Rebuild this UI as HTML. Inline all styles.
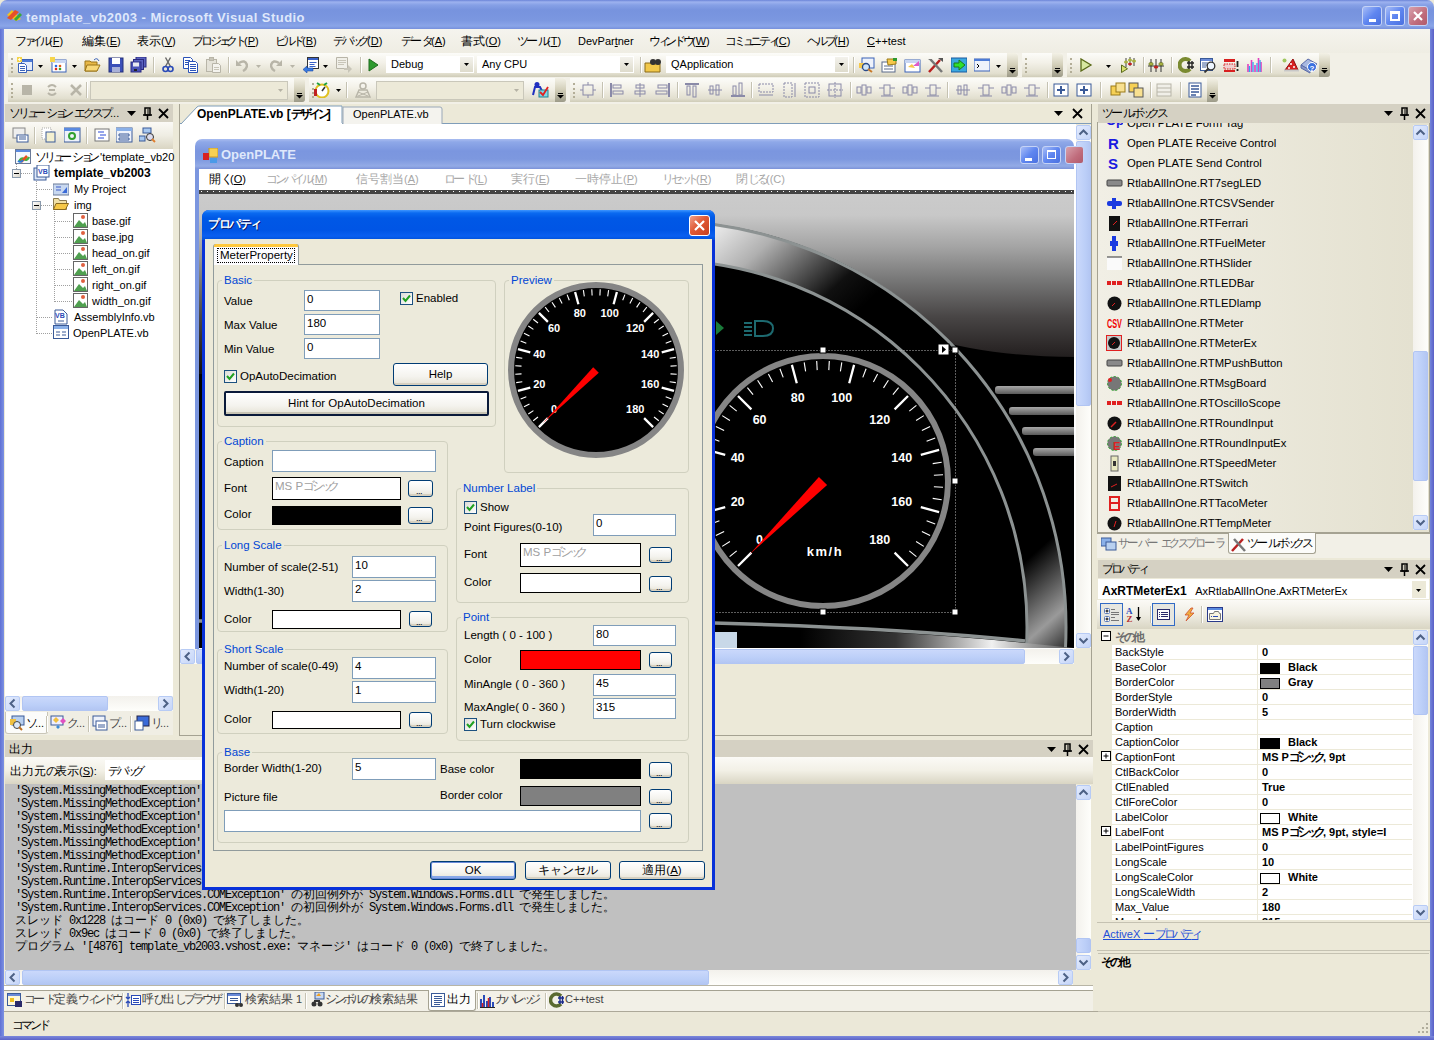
<!DOCTYPE html><html><head><meta charset="utf-8"><style>
*{margin:0;padding:0;box-sizing:border-box}
html,body{width:1434px;height:1040px;overflow:hidden}
body{position:relative;background:#ece9d8;font-family:"Liberation Sans",sans-serif;font-size:11px;color:#000}
.k{font-size:12px;letter-spacing:0}
.ks{font-size:12px;letter-spacing:-2px}
.h{font-size:12px;letter-spacing:3px}
.wide .k{letter-spacing:1px}
.wide .ks{letter-spacing:0}
.om .h{letter-spacing:3px;font-family:"Liberation Sans",sans-serif}
.cjk .k{letter-spacing:-3px}
.cjk .ks{letter-spacing:-5px}
.cjk .h{letter-spacing:0}
.cjk .wide .k{letter-spacing:-1.5px}
.cjk .wide .ks{letter-spacing:-3px}
.cjk .om .h{letter-spacing:0}
div{position:absolute}
.t{white-space:nowrap;line-height:14px}
.tb{position:absolute;background:linear-gradient(#fcfcf9,#f3f1e8 40%,#e2dfcf 85%,#cfccb8);border-radius:0 3px 3px 0}
.grip{position:absolute;width:2px;border-left:2px dotted #b3ae98}
.sep{position:absolute;width:1px;background:#c5c2b2;border-right:1px solid #fff}
.mono{font-family:"Liberation Mono",monospace;font-size:10px}
</style></head><body>
<div style="position:absolute;left:0px;top:0px;width:1434px;height:29px;background:linear-gradient(#6b84d8 0px,#9db2ef 2px,#86a0e6 5px,#7793de 10px,#7b97e0 20px,#8aa5e8 26px,#7690dc 29px);border-radius:7px 7px 0 0"></div>
<div style="position:absolute;left:0px;top:29px;width:4px;height:1011px;background:linear-gradient(90deg,#5f70d4,#7d92e2)"></div>
<div style="position:absolute;left:1430px;top:29px;width:4px;height:1011px;background:linear-gradient(90deg,#7386dc,#5a5fc6)"></div>
<div style="position:absolute;left:0px;top:1036px;width:1434px;height:4px;background:linear-gradient(#7a88dc,#5c64c8)"></div>
<svg style="position:absolute;left:6px;top:8px" width="16" height="14"><path d="M1 7 L6 2 L15 11 L10 13Z" fill="#f2c21a"/><path d="M1 10 L9 2 L13 4 L5 12Z" fill="#e6502a"/><path d="M9 12 L15 6" stroke="#3aa83a" stroke-width="3"/></svg>
<div class="t " style="left:26px;top:11px;font-weight:bold;font-size:13px;color:#dfe8fb;letter-spacing:0.45px">template_vb2003 - Microsoft Visual Studio</div>
<div style="position:absolute;left:1362px;top:6px;width:20px;height:20px;background:linear-gradient(135deg,#a7bdf7,#5f86f0 50%,#4a70e0);border:1px solid #c5d3f6;border-radius:3px"></div>
<div style="position:absolute;left:1385px;top:6px;width:20px;height:20px;background:linear-gradient(135deg,#a7bdf7,#5f86f0 50%,#4a70e0);border:1px solid #c5d3f6;border-radius:3px"></div>
<div style="position:absolute;left:1408px;top:6px;width:20px;height:20px;background:linear-gradient(135deg,#d8a1ac,#c06c7c 60%,#b05a6b);border:1px solid #c5d3f6;border-radius:3px"></div>
<div style="position:absolute;left:1369px;top:19px;width:7px;height:3px;background:#fff"></div>
<div style="position:absolute;left:1390px;top:11px;width:10px;height:10px;border:2px solid #fff;border-top-width:3px"></div>
<svg style="position:absolute;left:1411px;top:9px" width="14" height="14"><path d="M3 3L11 11M11 3L3 11" stroke="#fff" stroke-width="2.2"/></svg>
<div style="position:absolute;left:4px;top:29px;width:1426px;height:75px;background:#f2f0e7"></div>
<div style="position:absolute;left:4px;top:29px;width:1426px;height:24px;background:linear-gradient(#f5f4ee,#efede3)"></div>
<div class="t " style="left:15px;top:34px;"><span class="k">フ</span><span class="ks">ァ</span><span class="k">イル</span>(<u>F</u>)</div>
<div class="t " style="left:82px;top:34px;"><span class="h">編集</span>(<u>E</u>)</div>
<div class="t " style="left:137px;top:34px;"><span class="h">表示</span>(<u>V</u>)</div>
<div class="t " style="left:192px;top:34px;"><span class="k">プロジ</span><span class="ks">ェ</span><span class="k">クト</span>(<u>P</u>)</div>
<div class="t " style="left:275px;top:34px;"><span class="k">ビルド</span>(<u>B</u>)</div>
<div class="t " style="left:333px;top:34px;"><span class="k">デバ</span><span class="ks">ッ</span><span class="k">グ</span>(<u>D</u>)</div>
<div class="t " style="left:401px;top:34px;"><span class="k">デ</span><span class="h">ー</span><span class="k">タ</span>(<u>A</u>)</div>
<div class="t " style="left:461px;top:34px;"><span class="h">書式</span>(<u>O</u>)</div>
<div class="t " style="left:517px;top:34px;"><span class="k">ツ</span><span class="h">ー</span><span class="k">ル</span>(<u>T</u>)</div>
<div class="t " style="left:578px;top:34px;">DevPar<u>t</u>ner</div>
<div class="t " style="left:649px;top:34px;"><span class="k">ウ</span><span class="ks">ィ</span><span class="k">ンドウ</span>(<u>W</u>)</div>
<div class="t " style="left:725px;top:34px;"><span class="k">コミ</span><span class="ks">ュ</span><span class="k">ニテ</span><span class="ks">ィ</span>(<u>C</u>)</div>
<div class="t " style="left:807px;top:34px;"><span class="k">ヘルプ</span>(<u>H</u>)</div>
<div class="t " style="left:867px;top:34px;"><u>C</u>++test</div>
<div class="tb" style="left:8px;top:53px;width:1010px;height:24px"></div>
<div class="grip" style="left:11px;top:58px;height:15px"></div>
<div style="left:1007px;top:53px;width:11px;height:24px;background:linear-gradient(#f3f1e6,#d2ceb8 50%,#9c9a88);border-radius:0 3px 3px 0"></div>
<svg style="position:absolute;left:1009px;top:68px" width="7" height="6" viewBox="0 0 7 6"><rect x="1" y="0" width="5" height="1" fill="#000"/><path d="M0 2h7l-3.5 3.5z" fill="#000"/></svg>
<svg style="position:absolute;left:17px;top:57px" width="17" height="16" viewBox="0 0 17 16"><rect x="4.5" y="2.5" width="11" height="11" fill="#e4ecfa" stroke="#3a62b8"/><rect x="5" y="3" width="10" height="2" fill="#4d7bd6"/><path d="M1.5 6.5h6l2 2v7h-8z" fill="#fff" stroke="#3a62b8"/><path d="M3 9.5h5M3 11.5h5M3 13.5h5" stroke="#3a62b8"/><path d="M0 0h5v5H0z" fill="#f6d54b"/><path d="M1 2.5h3M2.5 1v3" stroke="#fff" stroke-width="0.8"/></svg>
<svg style="position:absolute;left:50px;top:57px" width="17" height="16" viewBox="0 0 17 16"><rect x="2" y="3" width="14" height="12" fill="#fff" stroke="#3a62b8"/><rect x="2" y="3" width="14" height="3" fill="#c8d6f2"/><circle cx="6" cy="9" r="1.3" fill="#2a6be0"/><circle cx="10" cy="9" r="1.3" fill="#e05a1a"/><circle cx="6" cy="12" r="1.3" fill="#e0281a"/><circle cx="10" cy="12" r="1.3" fill="#30a030"/><rect x="0" y="0" width="5" height="5" fill="#f6d54b"/></svg>
<svg style="position:absolute;left:84px;top:57px" width="17" height="16" viewBox="0 0 17 16"><path d="M1 4h5l1 1h6v9H1z" fill="#e8b848" stroke="#9a7418"/><path d="M3 8h13l-3 6H1z" fill="#f8d878" stroke="#9a7418"/><path d="M10 3q3-3 5 1" stroke="#3a62b8" fill="none"/></svg>
<svg style="position:absolute;left:108px;top:57px" width="16" height="16" viewBox="0 0 16 16"><rect x="1" y="1" width="14" height="14" fill="#3b4fb8" stroke="#25307a"/><rect x="4" y="1" width="8" height="6" fill="#fff"/><rect x="4" y="10" width="8" height="5" fill="#a8b0d8"/></svg>
<svg style="position:absolute;left:130px;top:57px" width="17" height="16" viewBox="0 0 17 16"><rect x="6" y="0" width="10" height="10" fill="#5a62c0" stroke="#2a2a80"/><rect x="3.5" y="2.5" width="10" height="10" fill="#5a62c0" stroke="#2a2a80"/><rect x="1" y="5" width="10" height="10" fill="#4a52b8" stroke="#2a2a80"/><rect x="3" y="5.5" width="6" height="4" fill="#e8e8f0"/><rect x="4" y="12" width="3" height="2" fill="#222"/></svg>
<svg style="position:absolute;left:38px;top:65px" width="5" height="3" viewBox="0 0 5 3"><path d="M0 0h5l-2.5 3z" fill="#000"/></svg>
<svg style="position:absolute;left:72px;top:65px" width="5" height="3" viewBox="0 0 5 3"><path d="M0 0h5l-2.5 3z" fill="#000"/></svg>
<div style="left:153px;top:57px;width:2px;height:16px;border-left:1px solid #c5c2b2;border-right:1px solid #fff"></div>
<svg style="position:absolute;left:162px;top:57px" width="12" height="16" viewBox="0 0 12 16"><path d="M3.5 0.5l5 9M8.5 0.5l-5 9" stroke="#666" stroke-width="1.4"/><circle cx="3.5" cy="12" r="2.5" fill="none" stroke="#2a4ab8" stroke-width="1.6"/><circle cx="8.5" cy="12" r="2.5" fill="none" stroke="#2a4ab8" stroke-width="1.6"/></svg>
<svg style="position:absolute;left:183px;top:57px" width="16" height="16" viewBox="0 0 16 16"><path d="M0.5 0.5h7l2 2v9h-9z" fill="#fff" stroke="#2a52b8"/><path d="M2 3.5h5M2 5.5h5M2 7.5h5" stroke="#2a52b8"/><path d="M5.5 4.5h7l2 2v9h-9z" fill="#fff" stroke="#2a52b8"/><path d="M7 7.5h6M7 9.5h6M7 11.5h6M7 13.5h6" stroke="#2a52b8"/></svg>
<svg style="position:absolute;left:206px;top:57px" width="16" height="16" viewBox="0 0 16 16"><rect x="0.5" y="2.5" width="10" height="12" fill="#e4e2d8" stroke="#b8b5a8"/><rect x="3.5" y="0.5" width="4" height="3" fill="#c8c5b8" stroke="#b8b5a8"/><path d="M6.5 6.5h6l2 2v7h-8z" fill="#f4f3ee" stroke="#b8b5a8"/><path d="M8 10.5h5M8 12.5h5" stroke="#c8c5b8"/></svg>
<div style="left:228px;top:57px;width:2px;height:16px;border-left:1px solid #c5c2b2;border-right:1px solid #fff"></div>
<svg style="position:absolute;left:236px;top:58px" width="12" height="14" viewBox="0 0 12 14"><path d="M3 5q6-4 8 2q0 4-4 6" fill="none" stroke="#b8b5a8" stroke-width="2.5"/><path d="M0 2v6h6z" fill="#b8b5a8"/></svg>
<svg style="position:absolute;left:256px;top:65px" width="5" height="3" viewBox="0 0 5 3"><path d="M0 0h5l-2.5 3z" fill="#b8b5a8"/></svg>
<svg style="position:absolute;left:270px;top:58px" width="12" height="14" viewBox="0 0 12 14"><path d="M9 5q-6-4-8 2q0 4 4 6" fill="none" stroke="#b8b5a8" stroke-width="2.5"/><path d="M12 2v6H6z" fill="#b8b5a8"/></svg>
<svg style="position:absolute;left:290px;top:65px" width="5" height="3" viewBox="0 0 5 3"><path d="M0 0h5l-2.5 3z" fill="#b8b5a8"/></svg>
<svg style="position:absolute;left:303px;top:57px" width="16" height="16" viewBox="0 0 16 16"><rect x="4.5" y="0.5" width="11" height="11" fill="#fff" stroke="#333"/><rect x="5" y="1" width="10" height="2" fill="#3a62c8"/><path d="M6.5 5.5h7M6.5 7.5h5M6.5 9.5h6" stroke="#3a62c8"/><path d="M0 12.5l4-3.5v2h6v3H4v2z" fill="#3a7ae0" stroke="#1a4aa8" stroke-width="0.6"/></svg>
<svg style="position:absolute;left:323px;top:65px" width="5" height="3" viewBox="0 0 5 3"><path d="M0 0h5l-2.5 3z" fill="#000"/></svg>
<svg style="position:absolute;left:336px;top:57px" width="16" height="16" viewBox="0 0 16 16"><path d="M0.5 0.5h11v11h-11z" fill="#f0efe8" stroke="#b8b5a8"/><path d="M2 3.5h8M2 5.5h8M2 7.5h6" stroke="#c8c5b8"/><path d="M8 11h4V8l4 4-4 4v-3H8z" fill="#c8c5b8"/></svg>
<div style="left:360px;top:57px;width:2px;height:16px;border-left:1px solid #c5c2b2;border-right:1px solid #fff"></div>
<svg style="position:absolute;left:367px;top:58px" width="12" height="14" viewBox="0 0 12 14"><path d="M2 1v12l9-6z" fill="#2e9a2e" stroke="#1e6a1e"/></svg>
<div style="left:386px;top:56px;width:88px;height:17px;background:#fff;border:1px solid #fff"></div>
<div style="left:460px;top:57px;width:13px;height:15px;background:linear-gradient(#f3f2ec,#dedbcc)"></div>
<svg style="position:absolute;left:464px;top:63px" width="5" height="3" viewBox="0 0 5 3"><path d="M0 0h5l-2.5 3z" fill="#000"/></svg>
<div class="t " style="left:391px;top:57px;">Debug</div>
<div style="left:477px;top:56px;width:157px;height:17px;background:#fff;border:1px solid #fff"></div>
<div style="left:620px;top:57px;width:13px;height:15px;background:linear-gradient(#f3f2ec,#dedbcc)"></div>
<svg style="position:absolute;left:624px;top:63px" width="5" height="3" viewBox="0 0 5 3"><path d="M0 0h5l-2.5 3z" fill="#000"/></svg>
<div class="t " style="left:482px;top:57px;">Any CPU</div>
<div style="left:640px;top:57px;width:2px;height:16px;border-left:1px solid #c5c2b2;border-right:1px solid #fff"></div>
<svg style="position:absolute;left:644px;top:57px" width="18" height="16" viewBox="0 0 18 16"><path d="M1 6h6l1 1h8v8H1z" fill="#f2c84a" stroke="#8a6a18"/><circle cx="9" cy="5" r="3" fill="#333"/><circle cx="14" cy="5" r="3" fill="#333"/></svg>
<div style="left:666px;top:56px;width:183px;height:17px;background:#fff;border:1px solid #fff"></div>
<div style="left:835px;top:57px;width:13px;height:15px;background:linear-gradient(#f3f2ec,#dedbcc)"></div>
<svg style="position:absolute;left:839px;top:63px" width="5" height="3" viewBox="0 0 5 3"><path d="M0 0h5l-2.5 3z" fill="#000"/></svg>
<div class="t " style="left:671px;top:57px;">QApplication</div>
<div style="left:853px;top:57px;width:2px;height:16px;border-left:1px solid #c5c2b2;border-right:1px solid #fff"></div>
<svg style="position:absolute;left:858px;top:57px" width="17" height="16" viewBox="0 0 17 16"><rect x="4" y="1" width="12" height="10" fill="#eef2fb" stroke="#3a62b8"/><path d="M1 6h6v5H1z" fill="#f6c84a"/><circle cx="8" cy="10" r="3.5" fill="#cfe4f8" stroke="#2a4a88" stroke-width="1.3"/><path d="M10 12l4 3" stroke="#c87a2a" stroke-width="2"/></svg>
<svg style="position:absolute;left:881px;top:57px" width="17" height="16" viewBox="0 0 17 16"><rect x="1" y="5" width="13" height="10" fill="#fff" stroke="#5a6a8a"/><path d="M3 9h9M3 12h9" stroke="#5a6a8a"/><path d="M6 2l9 0v5l-8 1z" fill="#f6c84a" stroke="#9a7a18"/><rect x="12" y="1" width="4" height="3" fill="#2e9a2e"/></svg>
<svg style="position:absolute;left:904px;top:57px" width="17" height="16" viewBox="0 0 17 16"><rect x="1" y="3" width="15" height="12" fill="#fff" stroke="#3a62b8"/><rect x="1" y="3" width="15" height="3" fill="#c8d6f2"/><path d="M4 10l4-3 3 4" fill="#f6c84a"/><path d="M9 9l6-5v5z" fill="#e05ac8"/></svg>
<svg style="position:absolute;left:927px;top:57px" width="17" height="16" viewBox="0 0 17 16"><path d="M2 15L13 3" stroke="#b82020" stroke-width="2.5"/><path d="M15 15L4 3" stroke="#777" stroke-width="2.5"/><path d="M1 2l4 0 0 3z" fill="#777"/><path d="M11 1h5v4z" fill="#555"/></svg>
<svg style="position:absolute;left:951px;top:57px" width="16" height="16" viewBox="0 0 16 16"><rect x="0" y="1" width="16" height="14" fill="#3aa8e0" stroke="#1a5aa0"/><path d="M3 6h5V3l6 5-6 5v-3H3z" fill="#2ee02e" stroke="#1a7a1a"/></svg>
<svg style="position:absolute;left:974px;top:57px" width="16" height="16" viewBox="0 0 16 16"><rect x="0" y="2" width="16" height="12" fill="#eef2fb" stroke="#3a62b8"/><rect x="0" y="2" width="16" height="2" fill="#4d7bd6"/><path d="M3 7l2 2-2 2" stroke="#000" fill="none"/></svg>
<svg style="position:absolute;left:996px;top:65px" width="5" height="3" viewBox="0 0 5 3"><path d="M0 0h5l-2.5 3z" fill="#000"/></svg>
<div class="tb" style="left:1022px;top:53px;width:41px;height:24px"></div>
<div class="grip" style="left:1025px;top:58px;height:15px"></div>
<div style="left:1052px;top:53px;width:11px;height:24px;background:linear-gradient(#f3f1e6,#d2ceb8 50%,#9c9a88);border-radius:0 3px 3px 0"></div>
<svg style="position:absolute;left:1054px;top:68px" width="7" height="6" viewBox="0 0 7 6"><rect x="1" y="0" width="5" height="1" fill="#000"/><path d="M0 2h7l-3.5 3.5z" fill="#000"/></svg>
<div class="tb" style="left:1067px;top:53px;width:263px;height:24px"></div>
<div class="grip" style="left:1070px;top:58px;height:15px"></div>
<div style="left:1319px;top:53px;width:11px;height:24px;background:linear-gradient(#f3f1e6,#d2ceb8 50%,#9c9a88);border-radius:0 3px 3px 0"></div>
<svg style="position:absolute;left:1321px;top:68px" width="7" height="6" viewBox="0 0 7 6"><rect x="1" y="0" width="5" height="1" fill="#000"/><path d="M0 2h7l-3.5 3.5z" fill="#000"/></svg>
<svg style="position:absolute;left:1079px;top:58px" width="14" height="14" viewBox="0 0 14 14"><path d="M2 1v12l10-6z" fill="#d8e8a0" stroke="#5a6a18" stroke-width="1.3"/></svg>
<svg style="position:absolute;left:1106px;top:65px" width="5" height="3" viewBox="0 0 5 3"><path d="M0 0h5l-2.5 3z" fill="#000"/></svg>
<svg style="position:absolute;left:1120px;top:57px" width="16" height="16" viewBox="0 0 16 16"><path d="M1.5 8v7.5l6-3.75z" fill="#d8e070" stroke="#5a6a18"/><path d="M6 1v9M10 0v9M14 1v8" stroke="#444"/><ellipse cx="6" cy="5" rx="2" ry="1.5" fill="#a8b040"/><ellipse cx="10" cy="3" rx="2" ry="1.5" fill="#a8b040"/><ellipse cx="10" cy="7" rx="2" ry="1.2" fill="#c02020"/><ellipse cx="14" cy="4" rx="2" ry="1.5" fill="#a8b040"/></svg>
<div style="left:1143px;top:57px;width:2px;height:16px;border-left:1px solid #c5c2b2;border-right:1px solid #fff"></div>
<svg style="position:absolute;left:1148px;top:58px" width="16" height="15" viewBox="0 0 16 15"><path d="M3 1v13M8 1v13M13 1v13M0 8h16" stroke="#333"/><ellipse cx="3" cy="6" rx="2.2" ry="1.6" fill="#a8b040" stroke="#5a6a18" stroke-width="0.6"/><ellipse cx="8" cy="9" rx="2.2" ry="1.6" fill="#c02020"/><ellipse cx="13" cy="6" rx="2.2" ry="1.6" fill="#a8b040" stroke="#5a6a18" stroke-width="0.6"/></svg>
<div style="left:1171px;top:57px;width:2px;height:16px;border-left:1px solid #c5c2b2;border-right:1px solid #fff"></div>
<svg style="position:absolute;left:1178px;top:57px" width="16" height="16" viewBox="0 0 16 16"><path d="M12 4A6 6 0 1 0 12 12" fill="none" stroke="#7a8a30" stroke-width="4"/><path d="M9 6h7M9 10h7M11 4v8M14 4v8" stroke="#222" stroke-width="1.4"/></svg>
<svg style="position:absolute;left:1200px;top:57px" width="16" height="16" viewBox="0 0 16 16"><rect x="0.5" y="1.5" width="12" height="12" fill="#fff" stroke="#3a5a98"/><rect x="1" y="2" width="11" height="2" fill="#6a8ad8"/><path d="M2 6h6M2 8h5M2 10h4" stroke="#3a5a98"/><circle cx="11" cy="9" r="3.8" fill="#eef6ff" stroke="#333" stroke-width="1.3"/><path d="M8.5 11.5l-4 4" stroke="#333" stroke-width="1.8"/></svg>
<svg style="position:absolute;left:1223px;top:57px" width="16" height="16" viewBox="0 0 16 16"><rect x="1" y="2" width="11" height="3" fill="#d82020"/><rect x="1" y="7" width="11" height="5" fill="#f0d0d0" stroke="#d82020" stroke-dasharray="1.5 1"/><rect x="1" y="13" width="11" height="2" fill="#d82020"/><path d="M14.5 4v6M14.5 12v2" stroke="#222" stroke-width="1.8"/></svg>
<svg style="position:absolute;left:1246px;top:57px" width="16" height="16" viewBox="0 0 16 16"><path d="M2 15V7M5.5 15V3M9 15V8M12.5 15V1M15 15V5" stroke="#e040c0" stroke-width="1.6"/><path d="M3.5 15V9M7 15V5M11 15V6M14 15V3" stroke="#30a8f0" stroke-width="1.3"/></svg>
<div style="left:1270px;top:57px;width:2px;height:16px;border-left:1px solid #c5c2b2;border-right:1px solid #fff"></div>
<svg style="position:absolute;left:1282px;top:57px" width="18" height="16" viewBox="0 0 18 16"><path d="M3 13L11 2l5 11z" fill="#d82020" stroke="#901010"/><circle cx="9" cy="7" r="1" fill="#fff"/><circle cx="12" cy="10" r="1" fill="#fff"/><circle cx="7" cy="11" r="1" fill="#fff"/><path d="M2 13.5h15" stroke="#c8c8c8" stroke-width="2"/><circle cx="2.5" cy="3.5" r="2" fill="#a0c860"/></svg>
<svg style="position:absolute;left:1300px;top:57px" width="18" height="17" viewBox="0 0 18 17"><path d="M1 8l7-6 9 5-7 7z" fill="#a8b8e0" stroke="#5a6aa8"/><path d="M1 8v3l9 5v-3z" fill="#8898c8" stroke="#5a6aa8"/><circle cx="12" cy="10" r="4.5" fill="#3a70e0" stroke="#fff"/><text x="9.5" y="13.5" font-size="8" font-weight="bold" fill="#fff" font-family="Liberation Sans">?</text></svg>
<div class="tb" style="left:8px;top:78px;width:297px;height:24px"></div>
<div class="grip" style="left:11px;top:83px;height:15px"></div>
<div style="left:294px;top:78px;width:11px;height:24px;background:linear-gradient(#f3f1e6,#d2ceb8 50%,#9c9a88);border-radius:0 3px 3px 0"></div>
<svg style="position:absolute;left:296px;top:93px" width="7" height="6" viewBox="0 0 7 6"><rect x="1" y="0" width="5" height="1" fill="#000"/><path d="M0 2h7l-3.5 3.5z" fill="#000"/></svg>
<svg style="position:absolute;left:21px;top:84px" width="12" height="12" viewBox="0 0 12 12"><rect x="1" y="1" width="10" height="10" fill="#b8b5a8"/></svg>
<svg style="position:absolute;left:46px;top:83px" width="12" height="14" viewBox="0 0 12 14"><path d="M2 4q4-4 8 0M2 10q4 4 8 0M3 7h6" stroke="#b8b5a8" stroke-width="2" fill="none"/></svg>
<svg style="position:absolute;left:70px;top:84px" width="12" height="12" viewBox="0 0 12 12"><path d="M1 11L11 1M1 1l10 10" stroke="#b8b5a8" stroke-width="2.5"/></svg>
<div style="left:86px;top:82px;width:2px;height:16px;border-left:1px solid #c5c2b2;border-right:1px solid #fff"></div>
<div style="left:90px;top:81px;width:198px;height:19px;background:#ece9d8;border:1px solid #c9c7ba"></div>
<div style="left:274px;top:82px;width:13px;height:17px;background:#ece9d8"></div>
<svg style="position:absolute;left:278px;top:89px" width="5" height="3" viewBox="0 0 5 3"><path d="M0 0h5l-2.5 3z" fill="#b5b2a5"/></svg>
<div class="tb" style="left:309px;top:78px;width:257px;height:24px"></div>
<div class="grip" style="left:312px;top:83px;height:15px"></div>
<div style="left:555px;top:78px;width:11px;height:24px;background:linear-gradient(#f3f1e6,#d2ceb8 50%,#9c9a88);border-radius:0 3px 3px 0"></div>
<svg style="position:absolute;left:557px;top:93px" width="7" height="6" viewBox="0 0 7 6"><rect x="1" y="0" width="5" height="1" fill="#000"/><path d="M0 2h7l-3.5 3.5z" fill="#000"/></svg>
<svg style="position:absolute;left:313px;top:81px" width="17" height="17" viewBox="0 0 17 17"><circle cx="9" cy="10" r="6.5" fill="#fff" stroke="#e0c020" stroke-width="2"/><path d="M9 10l3-4" stroke="#333" stroke-width="1.5"/><rect x="1" y="8" width="3" height="7" fill="#c02020"/><path d="M4 2l3 2M14 2l-3 2" stroke="#20a040" stroke-width="2"/></svg>
<svg style="position:absolute;left:336px;top:89px" width="5" height="3" viewBox="0 0 5 3"><path d="M0 0h5l-2.5 3z" fill="#000"/></svg>
<div style="left:346px;top:82px;width:2px;height:16px;border-left:1px solid #c5c2b2;border-right:1px solid #fff"></div>
<svg style="position:absolute;left:355px;top:82px" width="16" height="16" viewBox="0 0 16 16"><circle cx="8" cy="4" r="3" fill="none" stroke="#b8b5a8" stroke-width="1.5"/><path d="M1 15l3-7h8l3 7z" fill="none" stroke="#b8b5a8" stroke-width="1.5"/><path d="M3 10l10 4M13 10L3 14" stroke="#b8b5a8"/></svg>
<div style="left:376px;top:81px;width:148px;height:19px;background:#ece9d8;border:1px solid #c9c7ba"></div>
<div style="left:510px;top:82px;width:13px;height:17px;background:#ece9d8"></div>
<svg style="position:absolute;left:514px;top:89px" width="5" height="3" viewBox="0 0 5 3"><path d="M0 0h5l-2.5 3z" fill="#b5b2a5"/></svg>
<svg style="position:absolute;left:532px;top:81px" width="17" height="17" viewBox="0 0 17 17"><circle cx="5" cy="3.5" r="2.5" fill="#2030c0"/><path d="M1 14l2-8h5l2 4" fill="none" stroke="#2030c0" stroke-width="2"/><rect x="7" y="9" width="9" height="7" fill="#80d8e8" stroke="#208090"/><path d="M8 11l3 3 5-8" stroke="#e02020" stroke-width="1.8" fill="none"/></svg>
<div class="tb" style="left:570px;top:78px;width:648px;height:24px"></div>
<div class="grip" style="left:573px;top:83px;height:15px"></div>
<div style="left:1207px;top:78px;width:11px;height:24px;background:linear-gradient(#f3f1e6,#d2ceb8 50%,#9c9a88);border-radius:0 3px 3px 0"></div>
<svg style="position:absolute;left:1209px;top:93px" width="7" height="6" viewBox="0 0 7 6"><rect x="1" y="0" width="5" height="1" fill="#000"/><path d="M0 2h7l-3.5 3.5z" fill="#000"/></svg>
<svg style="position:absolute;left:580px;top:82px" width="16" height="16" viewBox="0 0 16 16"><rect x="3" y="3" width="10" height="10" fill="none" stroke="#8a8aa8"/><path d="M8 0v3M8 13v3M0 8h3M13 8h3" stroke="#8a8aa8"/></svg>
<div style="left:602px;top:82px;width:2px;height:16px;border-left:1px solid #c5c2b2;border-right:1px solid #fff"></div>
<svg style="position:absolute;left:609px;top:82px" width="16" height="16" viewBox="0 0 16 16"><path d="M2 1v14" stroke="#8a8aa8" stroke-width="2"/><rect x="4" y="3" width="8" height="3" fill="none" stroke="#8a8aa8"/><rect x="4" y="9" width="10" height="3" fill="none" stroke="#8a8aa8"/></svg>
<svg style="position:absolute;left:632px;top:82px" width="16" height="16" viewBox="0 0 16 16"><path d="M8 1v14" stroke="#8a8aa8"/><rect x="4" y="3" width="8" height="3" fill="none" stroke="#8a8aa8"/><rect x="3" y="9" width="10" height="3" fill="none" stroke="#8a8aa8"/></svg>
<svg style="position:absolute;left:655px;top:82px" width="16" height="16" viewBox="0 0 16 16"><path d="M14 1v14" stroke="#8a8aa8" stroke-width="2"/><rect x="3" y="3" width="9" height="3" fill="none" stroke="#8a8aa8"/><rect x="1" y="9" width="11" height="3" fill="none" stroke="#8a8aa8"/></svg>
<div style="left:677px;top:82px;width:2px;height:16px;border-left:1px solid #c5c2b2;border-right:1px solid #fff"></div>
<svg style="position:absolute;left:684px;top:82px" width="16" height="16" viewBox="0 0 16 16"><path d="M1 2h14" stroke="#8a8aa8" stroke-width="2"/><rect x="3" y="4" width="3" height="9" fill="none" stroke="#8a8aa8"/><rect x="9" y="4" width="3" height="11" fill="none" stroke="#8a8aa8"/></svg>
<svg style="position:absolute;left:707px;top:82px" width="16" height="16" viewBox="0 0 16 16"><path d="M1 8h14" stroke="#8a8aa8"/><rect x="3" y="4" width="3" height="8" fill="none" stroke="#8a8aa8"/><rect x="9" y="3" width="3" height="10" fill="none" stroke="#8a8aa8"/></svg>
<svg style="position:absolute;left:730px;top:82px" width="16" height="16" viewBox="0 0 16 16"><path d="M1 14h14" stroke="#8a8aa8" stroke-width="2"/><rect x="3" y="4" width="3" height="9" fill="none" stroke="#8a8aa8"/><rect x="9" y="1" width="3" height="12" fill="none" stroke="#8a8aa8"/></svg>
<div style="left:751px;top:82px;width:2px;height:16px;border-left:1px solid #c5c2b2;border-right:1px solid #fff"></div>
<svg style="position:absolute;left:758px;top:82px" width="16" height="16" viewBox="0 0 16 16"><rect x="1" y="2" width="14" height="8" fill="none" stroke="#8a8aa8" stroke-dasharray="2 1"/><path d="M1 13h14" stroke="#8a8aa8"/></svg>
<svg style="position:absolute;left:781px;top:82px" width="16" height="16" viewBox="0 0 16 16"><rect x="3" y="1" width="8" height="14" fill="none" stroke="#8a8aa8" stroke-dasharray="2 1"/><path d="M14 1v14" stroke="#8a8aa8"/></svg>
<svg style="position:absolute;left:804px;top:82px" width="16" height="16" viewBox="0 0 16 16"><rect x="1" y="1" width="14" height="14" fill="none" stroke="#8a8aa8" stroke-dasharray="2 1"/><rect x="5" y="5" width="6" height="6" fill="none" stroke="#8a8aa8"/></svg>
<svg style="position:absolute;left:827px;top:82px" width="16" height="16" viewBox="0 0 16 16"><rect x="2" y="2" width="12" height="12" fill="none" stroke="#8a8aa8"/><path d="M8 0v16M0 8h16" stroke="#8a8aa8" stroke-dasharray="2 1"/></svg>
<div style="left:850px;top:82px;width:2px;height:16px;border-left:1px solid #c5c2b2;border-right:1px solid #fff"></div>
<svg style="position:absolute;left:856px;top:82px" width="16" height="16" viewBox="0 0 16 16"><rect x="1" y="5" width="4" height="6" fill="none" stroke="#8a8aa8"/><rect x="6" y="3" width="4" height="10" fill="none" stroke="#8a8aa8"/><rect x="11" y="5" width="4" height="6" fill="none" stroke="#8a8aa8"/></svg>
<svg style="position:absolute;left:879px;top:82px" width="16" height="16" viewBox="0 0 16 16"><rect x="5" y="3" width="6" height="10" fill="none" stroke="#8a8aa8"/><path d="M0 6h5M11 6h5M2 14h12" stroke="#8a8aa8"/></svg>
<svg style="position:absolute;left:902px;top:82px" width="16" height="16" viewBox="0 0 16 16"><rect x="1" y="5" width="4" height="6" fill="none" stroke="#8a8aa8"/><rect x="6" y="3" width="4" height="10" fill="none" stroke="#8a8aa8"/><rect x="11" y="5" width="4" height="6" fill="none" stroke="#8a8aa8"/></svg>
<svg style="position:absolute;left:925px;top:82px" width="16" height="16" viewBox="0 0 16 16"><rect x="5" y="3" width="6" height="10" fill="none" stroke="#8a8aa8"/><path d="M0 6h5M11 6h5M2 14h12" stroke="#8a8aa8"/></svg>
<div style="left:947px;top:82px;width:2px;height:16px;border-left:1px solid #c5c2b2;border-right:1px solid #fff"></div>
<svg style="position:absolute;left:955px;top:82px" width="16" height="16" viewBox="0 0 16 16"><path d="M1 8h14" stroke="#8a8aa8"/><rect x="3" y="4" width="3" height="8" fill="none" stroke="#8a8aa8"/><rect x="9" y="3" width="3" height="10" fill="none" stroke="#8a8aa8"/></svg>
<svg style="position:absolute;left:978px;top:82px" width="16" height="16" viewBox="0 0 16 16"><rect x="5" y="3" width="6" height="10" fill="none" stroke="#8a8aa8"/><path d="M0 6h5M11 6h5M2 14h12" stroke="#8a8aa8"/></svg>
<svg style="position:absolute;left:1001px;top:82px" width="16" height="16" viewBox="0 0 16 16"><rect x="1" y="5" width="4" height="6" fill="none" stroke="#8a8aa8"/><rect x="6" y="3" width="4" height="10" fill="none" stroke="#8a8aa8"/><rect x="11" y="5" width="4" height="6" fill="none" stroke="#8a8aa8"/></svg>
<svg style="position:absolute;left:1024px;top:82px" width="16" height="16" viewBox="0 0 16 16"><rect x="5" y="3" width="6" height="10" fill="none" stroke="#8a8aa8"/><path d="M0 6h5M11 6h5M2 14h12" stroke="#8a8aa8"/></svg>
<div style="left:1047px;top:82px;width:2px;height:16px;border-left:1px solid #c5c2b2;border-right:1px solid #fff"></div>
<svg style="position:absolute;left:1053px;top:82px" width="16" height="16" viewBox="0 0 16 16"><rect x="1" y="2" width="14" height="12" fill="#fff" stroke="#3a5a98"/><path d="M8 4v8M4 8h8" stroke="#3a5a98" stroke-width="2"/></svg>
<svg style="position:absolute;left:1076px;top:82px" width="16" height="16" viewBox="0 0 16 16"><rect x="1" y="2" width="14" height="12" fill="#fff" stroke="#3a5a98"/><path d="M8 4v8M4 8h8" stroke="#3a5a98" stroke-width="2"/></svg>
<div style="left:1100px;top:82px;width:2px;height:16px;border-left:1px solid #c5c2b2;border-right:1px solid #fff"></div>
<svg style="position:absolute;left:1110px;top:82px" width="16" height="16" viewBox="0 0 16 16"><rect x="1" y="4" width="9" height="9" fill="#f6d054" stroke="#9a7a18"/><rect x="6" y="1" width="9" height="9" fill="#f8e090" stroke="#9a7a18"/></svg>
<svg style="position:absolute;left:1128px;top:82px" width="16" height="16" viewBox="0 0 16 16"><rect x="1" y="1" width="9" height="9" fill="#f6d054" stroke="#555"/><rect x="6" y="6" width="9" height="9" fill="#f8e090" stroke="#555"/></svg>
<div style="left:1150px;top:82px;width:2px;height:16px;border-left:1px solid #c5c2b2;border-right:1px solid #fff"></div>
<svg style="position:absolute;left:1156px;top:82px" width="16" height="16" viewBox="0 0 16 16"><rect x="1" y="2" width="14" height="12" fill="#f0efe8" stroke="#b8b5a8"/><path d="M1 6h14M1 10h14" stroke="#b8b5a8"/></svg>
<div style="left:1180px;top:82px;width:2px;height:16px;border-left:1px solid #c5c2b2;border-right:1px solid #fff"></div>
<svg style="position:absolute;left:1188px;top:82px" width="16" height="16" viewBox="0 0 16 16"><rect x="1" y="1" width="12" height="14" fill="#fff" stroke="#3a5a98"/><path d="M3 4h8M3 7h8M3 10h8M3 13h5" stroke="#3a5a98" stroke-width="1.5"/></svg>
<div style="position:absolute;left:5px;top:104px;width:168px;height:19px;background:#d5d1c3"></div>
<div class="t " style="left:9px;top:106px;"><span class="k">ソリ</span><span class="ks">ュ</span><span class="h">ー</span><span class="k">シ</span><span class="ks">ョ</span><span class="k">ン</span> <span class="k">エクスプ</span>...</div>
<svg style="position:absolute;left:127px;top:111px" width="9" height="6" viewBox="0 0 9 6"><path d="M0 0h9l-4.5 5z" fill="#000"/></svg>
<svg style="position:absolute;left:143px;top:107px" width="9" height="13" viewBox="0 0 9 13"><path d="M2 1h5v7H2z" fill="none" stroke="#000" stroke-width="1.5"/><path d="M0 8h9M4.5 8v5" stroke="#000" stroke-width="1.5"/><path d="M5 2v5" stroke="#000"/></svg>
<svg style="position:absolute;left:158px;top:108px" width="11" height="11" viewBox="0 0 11 11"><path d="M1 1l9 9M10 1l-9 9" stroke="#000" stroke-width="1.8"/></svg>
<div style="position:absolute;left:5px;top:122px;width:168px;height:27px;background:linear-gradient(#fbfaf6,#efede3 50%,#d9d5c3)"></div>
<svg style="position:absolute;left:12px;top:127px" width="17" height="17" viewBox="0 0 17 17"><rect x="1" y="1" width="12" height="10" fill="#eee" stroke="#888"/><rect x="5" y="8" width="11" height="7" fill="#fff" stroke="#3a5a98"/><path d="M7 10h7M7 12h7" stroke="#3a5a98"/></svg>
<svg style="position:absolute;left:41px;top:127px" width="17" height="17" viewBox="0 0 17 17"><rect x="1" y="1" width="9" height="11" fill="#fff" stroke="#aaa" stroke-dasharray="1 1"/><rect x="5" y="5" width="9" height="10" fill="#f4f0d0" stroke="#3a5a98"/></svg>
<svg style="position:absolute;left:64px;top:127px" width="17" height="17" viewBox="0 0 17 17"><rect x="0" y="1" width="16" height="14" fill="#eef2fb" stroke="#3a5a98"/><rect x="0" y="1" width="16" height="3" fill="#5a8ae0"/><path d="M5 9a3 3 0 0 1 6 0M11 9a3 3 0 0 1-6 0" stroke="#30a030" stroke-width="2" fill="none"/></svg>
<svg style="position:absolute;left:94px;top:127px" width="17" height="17" viewBox="0 0 17 17"><rect x="1" y="2" width="14" height="12" fill="#fff" stroke="#777"/><path d="M4 5h6M6 8h6M4 11h6" stroke="#2a4ad8"/></svg>
<svg style="position:absolute;left:116px;top:127px" width="17" height="17" viewBox="0 0 17 17"><rect x="0" y="1" width="16" height="14" fill="#eef2fb" stroke="#3a5a98"/><rect x="0" y="1" width="16" height="3" fill="#8ab0e8"/><path d="M3 7h10v2H3zM3 11h10v2H3z" fill="none" stroke="#3a5a98"/></svg>
<svg style="position:absolute;left:139px;top:127px" width="17" height="17" viewBox="0 0 17 17"><rect x="4" y="1" width="8" height="5" fill="#a8c8f0" stroke="#3a5a98"/><rect x="0" y="9" width="6" height="5" fill="#a8c8f0" stroke="#3a5a98"/><circle cx="11" cy="10" r="3.5" fill="#dde" stroke="#333"/><path d="M13 12l3 3" stroke="#e08030" stroke-width="2"/></svg>
<div style="left:34px;top:127px;width:2px;height:17px;border-left:1px solid #c5c2b2;border-right:1px solid #fff"></div>
<div style="left:86px;top:127px;width:2px;height:17px;border-left:1px solid #c5c2b2;border-right:1px solid #fff"></div>
<div style="position:absolute;left:5px;top:149px;width:168px;height:547px;background:#fff"></div>
<svg style="position:absolute;left:0;top:0" width="180" height="360"><g stroke="#a0a0a0" stroke-dasharray="1 1"><path d="M16.5 164v5M21 173.5h12"/><path d="M36.5 179v155M37 189.5h16M41 205.5h12M37 317.5h16M37 333.5h16"/><path d="M54.5 211v91M55 221.5h18M55 237.5h18M55 253.5h18M55 269.5h18M55 285.5h18M55 301.5h18"/></g></svg>
<svg style="position:absolute;left:15px;top:149px" width="17" height="16" viewBox="0 0 17 16"><rect x="0.5" y="0.5" width="15" height="14" fill="#f4f8fe" stroke="#6a7a98"/><rect x="1" y="1" width="14" height="2" fill="#5a8ae0"/><path d="M4 13q2-5 5-3t5-2" fill="none" stroke="#40b040" stroke-width="2.5"/><path d="M6 13l6-6" stroke="#e85020" stroke-width="2.5"/><path d="M3 12q3 2 5-1" fill="none" stroke="#2a7ae0" stroke-width="2"/></svg>
<div class="t " style="left:35px;top:150px;"><span class="k">ソリ</span><span class="ks">ュ</span><span class="h">ー</span><span class="k">シ</span><span class="ks">ョ</span><span class="k">ン</span> 'template_vb20</div>
<svg style="position:absolute;left:33px;top:165px" width="17" height="16" viewBox="0 0 17 16"><rect x="1" y="3" width="12" height="12" fill="#dfe8f8" stroke="#3a5a98"/><rect x="4" y="0" width="12" height="12" fill="#fff" stroke="#3a5a98"/><text x="5" y="9" font-size="7" font-weight="bold" fill="#2a4ab8" font-family="Liberation Sans">VB</text></svg>
<div class="t " style="left:54px;top:166px;font-weight:bold;font-size:12px">template_vb2003</div>
<div style="position:absolute;left:12px;top:169px;width:9px;height:9px;background:linear-gradient(135deg,#fff,#d8d4c8);border:1px solid #8a9aac"></div>
<div style="position:absolute;left:14px;top:173px;width:5px;height:1px;background:#000"></div>
<svg style="position:absolute;left:53px;top:181px" width="16" height="16" viewBox="0 0 16 16"><rect x="0" y="3" width="16" height="11" fill="#c8d8f0" stroke="#6a7a98"/><path d="M3 6h5M3 9h5" stroke="#3a5ac8"/><path d="M9 12l5-6v6z" fill="#3a6ad8"/></svg>
<div class="t " style="left:74px;top:182px;">My Project</div>
<svg style="position:absolute;left:53px;top:197px" width="16" height="14" viewBox="0 0 16 14"><path d="M0.5 1.5h5l1 2h7v9h-13z" fill="#f0e0a8" stroke="#8a7a50"/><path d="M3 6.5h12.5l-3 6h-12z" fill="#f6c848" stroke="#8a6a20"/></svg>
<div class="t " style="left:74px;top:198px;">img</div>
<div style="position:absolute;left:32px;top:201px;width:9px;height:9px;background:linear-gradient(135deg,#fff,#d8d4c8);border:1px solid #8a9aac"></div>
<div style="position:absolute;left:34px;top:205px;width:5px;height:1px;background:#000"></div>
<svg style="position:absolute;left:73px;top:213px" width="15" height="15" viewBox="0 0 15 15"><rect x="0.5" y="0.5" width="14" height="14" fill="#fff" stroke="#666"/><path d="M1 14l5-7 4 4 2-2 2 5z" fill="#50a050"/><circle cx="10" cy="4" r="2" fill="#e06040"/></svg>
<div class="t " style="left:92px;top:214px;">base.gif</div>
<svg style="position:absolute;left:73px;top:229px" width="15" height="15" viewBox="0 0 15 15"><rect x="0.5" y="0.5" width="14" height="14" fill="#fff" stroke="#666"/><path d="M1 14l5-7 4 4 2-2 2 5z" fill="#50a050"/><circle cx="10" cy="4" r="2" fill="#e06040"/></svg>
<div class="t " style="left:92px;top:230px;">base.jpg</div>
<svg style="position:absolute;left:73px;top:245px" width="15" height="15" viewBox="0 0 15 15"><rect x="0.5" y="0.5" width="14" height="14" fill="#fff" stroke="#666"/><path d="M1 14l5-7 4 4 2-2 2 5z" fill="#50a050"/><circle cx="10" cy="4" r="2" fill="#e06040"/></svg>
<div class="t " style="left:92px;top:246px;">head_on.gif</div>
<svg style="position:absolute;left:73px;top:261px" width="15" height="15" viewBox="0 0 15 15"><rect x="0.5" y="0.5" width="14" height="14" fill="#fff" stroke="#666"/><path d="M1 14l5-7 4 4 2-2 2 5z" fill="#50a050"/><circle cx="10" cy="4" r="2" fill="#e06040"/></svg>
<div class="t " style="left:92px;top:262px;">left_on.gif</div>
<svg style="position:absolute;left:73px;top:277px" width="15" height="15" viewBox="0 0 15 15"><rect x="0.5" y="0.5" width="14" height="14" fill="#fff" stroke="#666"/><path d="M1 14l5-7 4 4 2-2 2 5z" fill="#50a050"/><circle cx="10" cy="4" r="2" fill="#e06040"/></svg>
<div class="t " style="left:92px;top:278px;">right_on.gif</div>
<svg style="position:absolute;left:73px;top:293px" width="15" height="15" viewBox="0 0 15 15"><rect x="0.5" y="0.5" width="14" height="14" fill="#fff" stroke="#666"/><path d="M1 14l5-7 4 4 2-2 2 5z" fill="#50a050"/><circle cx="10" cy="4" r="2" fill="#e06040"/></svg>
<div class="t " style="left:92px;top:294px;">width_on.gif</div>
<svg style="position:absolute;left:54px;top:309px" width="14" height="16" viewBox="0 0 14 16"><path d="M1 1h8l4 4v10H1z" fill="#fff" stroke="#3a5a98"/><text x="1" y="9" font-size="7" font-weight="bold" fill="#2a4ab8" font-family="Liberation Sans">VB</text><path d="M4 12h6" stroke="#3a5a98"/></svg>
<div class="t " style="left:74px;top:310px;">AssemblyInfo.vb</div>
<svg style="position:absolute;left:53px;top:325px" width="16" height="14" viewBox="0 0 16 14"><rect x="0.5" y="0.5" width="15" height="13" fill="#fff" stroke="#3a5a98"/><rect x="1" y="1" width="14" height="3" fill="#8ab0e8"/><path d="M3 7h4M9 7h4M3 10h4M9 10h4" stroke="#3a5a98"/></svg>
<div class="t " style="left:73px;top:326px;">OpenPLATE.vb</div>
<div style="position:absolute;left:5px;top:696px;width:168px;height:15px;background:linear-gradient(#f3f1ec,#fefefb)"></div>
<div style="left:5px;top:696px;width:15px;height:15px;background:linear-gradient(135deg,#e3ebfd,#c5d5f8);border:1px solid #b7cbf5;border-radius:2px"></div>
<svg style="position:absolute;left:0;top:0;overflow:visible" width="1" height="1"><path d="M14.5 699.5l-4 4 4 4" fill="none" stroke="#4d6185" stroke-width="2"/></svg>
<div style="left:158px;top:696px;width:15px;height:15px;background:linear-gradient(135deg,#e3ebfd,#c5d5f8);border:1px solid #b7cbf5;border-radius:2px"></div>
<svg style="position:absolute;left:0;top:0;overflow:visible" width="1" height="1"><path d="M163.5 699.5l4 4-4 4" fill="none" stroke="#4d6185" stroke-width="2"/></svg>
<div style="left:22px;top:696px;width:86px;height:15px;background:linear-gradient(#cad8fb,#bccff8 60%,#b3c6f3);border:1px solid #b1c5f3;border-radius:2px"></div>
<div style="position:absolute;left:5px;top:711px;width:168px;height:24px;background:#f0eee4"></div>
<div style="position:absolute;left:5px;top:712px;width:43px;height:22px;background:#fcfcfa;border:1px solid #c9c6b8;border-top:none;border-radius:0 0 3px 3px"></div>
<svg style="position:absolute;left:9px;top:715px" width="16" height="16" viewBox="0 0 16 16"><rect x="3" y="1" width="12" height="9" fill="#b8d0f0" stroke="#3a5a98"/><path d="M1 4h6v6H1z" fill="#f0c040"/><circle cx="8" cy="10" r="3.5" fill="#dde8f8" stroke="#444"/><path d="M10 12l3 3" stroke="#c07020" stroke-width="2"/></svg>
<div class="t " style="left:26px;top:716px;"><span class="k">ソ</span>...</div>
<svg style="position:absolute;left:50px;top:715px" width="16" height="16" viewBox="0 0 16 16"><rect x="1" y="1" width="12" height="9" fill="#eef" stroke="#3a5a98"/><path d="M3 5l3-3 3 3-3 3z" fill="#f0c040"/><path d="M10 6l3-3 3 3-3 3z" fill="#e050c0"/><path d="M6 12l2-2 2 2-2 2z" fill="#3a8ad8"/></svg>
<div class="t " style="left:67px;top:716px;color:#444"><span class="k">ク</span>...</div>
<div style="left:46px;top:716px;width:2px;height:16px;border-left:1px solid #c5c2b2;border-right:1px solid #fff"></div>
<svg style="position:absolute;left:92px;top:715px" width="16" height="16" viewBox="0 0 16 16"><rect x="1" y="1" width="12" height="10" fill="#eef2fb" stroke="#3a5a98"/><rect x="4" y="6" width="11" height="9" fill="#fff" stroke="#3a5a98"/><path d="M6 10h7M6 12h7" stroke="#3a5a98"/></svg>
<div class="t " style="left:109px;top:716px;color:#444"><span class="k">プ</span>...</div>
<div style="left:88px;top:716px;width:2px;height:16px;border-left:1px solid #c5c2b2;border-right:1px solid #fff"></div>
<svg style="position:absolute;left:134px;top:715px" width="16" height="16" viewBox="0 0 16 16"><rect x="3" y="1" width="12" height="10" fill="#3a6ad8" stroke="#224"/><rect x="1" y="6" width="8" height="9" fill="#fff" stroke="#3a5a98"/></svg>
<div class="t " style="left:151px;top:716px;color:#444"><span class="k">リ</span>...</div>
<div style="left:130px;top:716px;width:2px;height:16px;border-left:1px solid #c5c2b2;border-right:1px solid #fff"></div>
<div style="position:absolute;left:179px;top:104px;width:913px;height:632px;border:1px solid #a5a292;border-top:none;background:#ece9d8"></div>
<div style="position:absolute;left:180px;top:104px;width:911px;height:20px;background:#ece9d8"></div>
<div style="position:absolute;left:180px;top:123px;width:911px;height:1px;background:#7f9db9"></div>
<svg style="position:absolute;left:180px;top:104px" width="270" height="21"><path d="M1 20L17 3q1-1 3-1h142v18z" fill="#fff" stroke="#7f9db9"/><path d="M163 20V3h97q2 0 2 2v15" fill="#f4f3ee" stroke="#9aa8b8"/><path d="M2 20h160" stroke="#fff" stroke-width="2"/></svg>
<div class="t " style="left:197px;top:107px;font-weight:bold;font-size:12px">OpenPLATE.vb [<span class="k">デザイン</span>]</div>
<div class="t " style="left:353px;top:107px;">OpenPLATE.vb</div>
<svg style="position:absolute;left:1054px;top:111px" width="9" height="6" viewBox="0 0 9 6"><path d="M0 0h9l-4.5 5z" fill="#000"/></svg>
<svg style="position:absolute;left:1072px;top:108px" width="11" height="11" viewBox="0 0 11 11"><path d="M1 1l9 9M10 1l-9 9" stroke="#000" stroke-width="1.8"/></svg>
<div style="position:absolute;left:180px;top:124px;width:896px;height:525px;background:#fff"></div>
<div style="position:absolute;left:1076px;top:125px;width:15px;height:523px;background:linear-gradient(90deg,#f3f1ec,#fefefb)"></div>
<div style="left:1076px;top:125px;width:15px;height:15px;background:linear-gradient(135deg,#e3ebfd,#c5d5f8);border:1px solid #b7cbf5;border-radius:2px"></div>
<svg style="position:absolute;left:0;top:0;overflow:visible" width="1" height="1"><path d="M1079.5 134.5l4-4 4 4" fill="none" stroke="#4d6185" stroke-width="2"/></svg>
<div style="left:1076px;top:633px;width:15px;height:15px;background:linear-gradient(135deg,#e3ebfd,#c5d5f8);border:1px solid #b7cbf5;border-radius:2px"></div>
<svg style="position:absolute;left:0;top:0;overflow:visible" width="1" height="1"><path d="M1079.5 638.5l4 4 4-4" fill="none" stroke="#4d6185" stroke-width="2"/></svg>
<div style="left:1076px;top:141px;width:15px;height:265px;background:linear-gradient(90deg,#cad8fb,#bccff8 60%,#b3c6f3);border:1px solid #b1c5f3;border-radius:2px"></div>
<div style="position:absolute;left:180px;top:649px;width:894px;height:15px;background:linear-gradient(#f3f1ec,#fefefb)"></div>
<div style="left:180px;top:649px;width:15px;height:15px;background:linear-gradient(135deg,#e3ebfd,#c5d5f8);border:1px solid #b7cbf5;border-radius:2px"></div>
<svg style="position:absolute;left:0;top:0;overflow:visible" width="1" height="1"><path d="M189.5 652.5l-4 4 4 4" fill="none" stroke="#4d6185" stroke-width="2"/></svg>
<div style="left:1059px;top:649px;width:15px;height:15px;background:linear-gradient(135deg,#e3ebfd,#c5d5f8);border:1px solid #b7cbf5;border-radius:2px"></div>
<svg style="position:absolute;left:0;top:0;overflow:visible" width="1" height="1"><path d="M1064.5 652.5l4 4-4 4" fill="none" stroke="#4d6185" stroke-width="2"/></svg>
<div style="left:196px;top:649px;width:829px;height:15px;background:linear-gradient(#cad8fb,#bccff8 60%,#b3c6f3);border:1px solid #b1c5f3;border-radius:2px"></div>
<div style="position:absolute;left:1076px;top:649px;width:15px;height:15px;background:#ece9d8"></div>
<div style="position:absolute;left:195px;top:139px;width:879px;height:30px;background:linear-gradient(#a9bcf0 0px,#8ea8e8 3px,#7b96df 12px,#7d98df 20px,#93abe6 27px,#7b92d8 30px);border-radius:7px 7px 0 0"></div>
<svg style="position:absolute;left:203px;top:148px" width="15" height="15" viewBox="0 0 15 15"><rect x="6" y="0" width="9" height="9" fill="#f6d054" stroke="#c89a20"/><rect x="0" y="5" width="6" height="7" fill="#d82020"/><rect x="7" y="10" width="7" height="5" fill="#4a9ae8"/></svg>
<div class="t " style="left:221px;top:148px;font-weight:bold;font-size:13px;color:#dfe8fb">OpenPLATE</div>
<div style="position:absolute;left:1020px;top:146px;width:19px;height:18px;background:linear-gradient(135deg,#a7bdf7,#5f86f0 50%,#4a70e0);border:1px solid #c5d3f6;border-radius:3px"></div>
<div style="position:absolute;left:1042px;top:146px;width:19px;height:18px;background:linear-gradient(135deg,#a7bdf7,#5f86f0 50%,#4a70e0);border:1px solid #c5d3f6;border-radius:3px"></div>
<div style="position:absolute;left:1065px;top:146px;width:19px;height:18px;background:linear-gradient(135deg,#d8a1ac,#c06c7c 60%,#b05a6b);border:1px solid #c5d3f6;border-radius:3px"></div>
<div style="position:absolute;left:1025px;top:158px;width:7px;height:3px;background:#fff"></div>
<div style="position:absolute;left:1047px;top:150px;width:9px;height:9px;border:1px solid #fff;border-top-width:2px"></div>
<div style="position:absolute;left:195px;top:169px;width:4px;height:480px;background:#7b96df"></div>
<div style="position:absolute;left:199px;top:190px;width:4px;height:458px;background:#000"></div>
<div style="position:absolute;left:199px;top:169px;width:875px;height:21px;background:#fff"></div>
<div class="t " style="left:209px;top:172px;color:#000"><span class="h">開</span><span class="k">く</span>(<u>O</u>)</div>
<div class="t " style="left:266px;top:172px;color:#a7a7a7"><span class="k">コンパイル</span>(<u>M</u>)</div>
<div class="t " style="left:356px;top:172px;color:#a7a7a7"><span class="h">信号割当</span>(<u>A</u>)</div>
<div class="t " style="left:444px;top:172px;color:#a7a7a7"><span class="k">ロ</span><span class="h">ー</span><span class="k">ド</span>(<u>L</u>)</div>
<div class="t " style="left:511px;top:172px;color:#a7a7a7"><span class="h">実行</span>(<u>E</u>)</div>
<div class="t " style="left:575px;top:172px;color:#a7a7a7"><span class="h">一時停止</span>(<u>P</u>)</div>
<div class="t " style="left:662px;top:172px;color:#a7a7a7"><span class="k">リセ</span><span class="ks">ッ</span><span class="k">ト</span>(<u>R</u>)</div>
<div class="t " style="left:736px;top:172px;color:#a7a7a7"><span class="h">閉</span><span class="k">じる</span>((C)</div>
<svg style="position:absolute;left:0;top:0" width="1434" height="1040" viewBox="0 0 1434 1040"><defs><linearGradient id="topg" x1="0" y1="194" x2="0" y2="370" gradientUnits="userSpaceOnUse"><stop offset="0" stop-color="#cbcbcb"/><stop offset="0.12" stop-color="#c8c8c8"/><stop offset="0.3" stop-color="#a4a4a4"/><stop offset="0.5" stop-color="#747474"/><stop offset="0.7" stop-color="#484545"/><stop offset="0.88" stop-color="#2a2626"/><stop offset="1" stop-color="#151212"/></linearGradient><linearGradient id="ring" x1="700" y1="230" x2="1070" y2="640" gradientUnits="userSpaceOnUse"><stop offset="0" stop-color="#f4f4f4"/><stop offset="0.1" stop-color="#b0b0b0"/><stop offset="0.24" stop-color="#101010"/><stop offset="0.3" stop-color="#000"/><stop offset="0.84" stop-color="#000"/><stop offset="0.95" stop-color="#9a9a9a"/><stop offset="1" stop-color="#3a3a3a"/></linearGradient><linearGradient id="bar" x1="0" y1="0" x2="0" y2="1"><stop offset="0" stop-color="#a8a8a8"/><stop offset="1" stop-color="#5a5a5a"/></linearGradient><linearGradient id="botg" x1="800" y1="0" x2="1074" y2="0" gradientUnits="userSpaceOnUse"><stop offset="0" stop-color="#000"/><stop offset="0.35" stop-color="#333"/><stop offset="0.7" stop-color="#f0f0f0"/><stop offset="0.85" stop-color="#999"/><stop offset="1" stop-color="#555"/></linearGradient><clipPath id="dc"><rect x="199" y="194" width="875" height="454"/></clipPath></defs><g clip-path="url(#dc)"><rect x="195" y="190" width="880" height="460" fill="#000"/><rect x="195" y="194" width="880" height="180" fill="url(#topg)"/><path d="M930 338 Q985 356 1074 357 L1074 420 L930 420z" fill="#000"/><rect x="995" y="386" width="90" height="8" rx="3" fill="url(#bar)"/><rect x="1009" y="407" width="90" height="8" rx="3" fill="url(#bar)"/><rect x="1022" y="427" width="90" height="8" rx="3" fill="url(#bar)"/><rect x="1033" y="448" width="90" height="8" rx="3" fill="url(#bar)"/><circle cx="660" cy="627" r="407" fill="#000"/><circle cx="660" cy="627" r="387" fill="none" stroke="url(#ring)" stroke-width="40"/><circle cx="660" cy="627" r="406" fill="none" stroke="#8c9292" stroke-width="3"/><circle cx="660" cy="627" r="367" fill="#000" stroke="#8c9292" stroke-width="3"/><path d="M199 623 L714 625 Q900 630 1025 643 L1074 648 L199 648z" fill="url(#botg)"/><path d="M199 621 L714 623 Q900 628 1025 641" fill="none" stroke="#8c9292" stroke-width="3.5"/><circle cx="823" cy="481" r="125.0" fill="#000" stroke="#858585" stroke-width="6"/><line x1="751.4" y1="552.6" x2="738.0" y2="566.0" stroke="#fff" stroke-width="2.3"/><line x1="736.7" y1="550.9" x2="729.6" y2="556.6" stroke="#fff" stroke-width="1.1"/><line x1="729.9" y1="541.5" x2="722.2" y2="546.4" stroke="#fff" stroke-width="1.1"/><line x1="724.1" y1="531.4" x2="715.9" y2="535.6" stroke="#fff" stroke-width="1.1"/><line x1="719.4" y1="520.8" x2="710.8" y2="524.1" stroke="#fff" stroke-width="1.1"/><line x1="725.2" y1="507.2" x2="706.9" y2="512.1" stroke="#fff" stroke-width="2.3"/><line x1="713.3" y1="498.4" x2="704.3" y2="499.8" stroke="#fff" stroke-width="1.1"/><line x1="712.1" y1="486.8" x2="703.0" y2="487.3" stroke="#fff" stroke-width="1.1"/><line x1="712.1" y1="475.2" x2="703.0" y2="474.7" stroke="#fff" stroke-width="1.1"/><line x1="713.3" y1="463.6" x2="704.3" y2="462.2" stroke="#fff" stroke-width="1.1"/><line x1="725.2" y1="454.8" x2="706.9" y2="449.9" stroke="#fff" stroke-width="2.3"/><line x1="719.4" y1="441.2" x2="710.8" y2="437.9" stroke="#fff" stroke-width="1.1"/><line x1="724.1" y1="430.6" x2="715.9" y2="426.4" stroke="#fff" stroke-width="1.1"/><line x1="729.9" y1="420.5" x2="722.2" y2="415.6" stroke="#fff" stroke-width="1.1"/><line x1="736.7" y1="411.1" x2="729.6" y2="405.4" stroke="#fff" stroke-width="1.1"/><line x1="751.4" y1="409.4" x2="738.0" y2="396.0" stroke="#fff" stroke-width="2.3"/><line x1="753.1" y1="394.7" x2="747.4" y2="387.6" stroke="#fff" stroke-width="1.1"/><line x1="762.5" y1="387.9" x2="757.6" y2="380.2" stroke="#fff" stroke-width="1.1"/><line x1="772.6" y1="382.1" x2="768.4" y2="373.9" stroke="#fff" stroke-width="1.1"/><line x1="783.2" y1="377.4" x2="779.9" y2="368.8" stroke="#fff" stroke-width="1.1"/><line x1="796.8" y1="383.2" x2="791.9" y2="364.9" stroke="#fff" stroke-width="2.3"/><line x1="805.6" y1="371.3" x2="804.2" y2="362.3" stroke="#fff" stroke-width="1.1"/><line x1="817.2" y1="370.1" x2="816.7" y2="361.0" stroke="#fff" stroke-width="1.1"/><line x1="828.8" y1="370.1" x2="829.3" y2="361.0" stroke="#fff" stroke-width="1.1"/><line x1="840.4" y1="371.3" x2="841.8" y2="362.3" stroke="#fff" stroke-width="1.1"/><line x1="849.2" y1="383.2" x2="854.1" y2="364.9" stroke="#fff" stroke-width="2.3"/><line x1="862.8" y1="377.4" x2="866.1" y2="368.8" stroke="#fff" stroke-width="1.1"/><line x1="873.4" y1="382.1" x2="877.6" y2="373.9" stroke="#fff" stroke-width="1.1"/><line x1="883.5" y1="387.9" x2="888.4" y2="380.2" stroke="#fff" stroke-width="1.1"/><line x1="892.9" y1="394.7" x2="898.6" y2="387.6" stroke="#fff" stroke-width="1.1"/><line x1="894.6" y1="409.4" x2="908.0" y2="396.0" stroke="#fff" stroke-width="2.3"/><line x1="909.3" y1="411.1" x2="916.4" y2="405.4" stroke="#fff" stroke-width="1.1"/><line x1="916.1" y1="420.5" x2="923.8" y2="415.6" stroke="#fff" stroke-width="1.1"/><line x1="921.9" y1="430.6" x2="930.1" y2="426.4" stroke="#fff" stroke-width="1.1"/><line x1="926.6" y1="441.2" x2="935.2" y2="437.9" stroke="#fff" stroke-width="1.1"/><line x1="920.8" y1="454.8" x2="939.1" y2="449.9" stroke="#fff" stroke-width="2.3"/><line x1="932.7" y1="463.6" x2="941.7" y2="462.2" stroke="#fff" stroke-width="1.1"/><line x1="933.9" y1="475.2" x2="943.0" y2="474.7" stroke="#fff" stroke-width="1.1"/><line x1="933.9" y1="486.8" x2="943.0" y2="487.3" stroke="#fff" stroke-width="1.1"/><line x1="932.7" y1="498.4" x2="941.7" y2="499.8" stroke="#fff" stroke-width="1.1"/><line x1="920.8" y1="507.2" x2="939.1" y2="512.1" stroke="#fff" stroke-width="2.3"/><line x1="926.6" y1="520.8" x2="935.2" y2="524.1" stroke="#fff" stroke-width="1.1"/><line x1="921.9" y1="531.4" x2="930.1" y2="535.6" stroke="#fff" stroke-width="1.1"/><line x1="916.1" y1="541.5" x2="923.8" y2="546.4" stroke="#fff" stroke-width="1.1"/><line x1="909.3" y1="550.9" x2="916.4" y2="556.6" stroke="#fff" stroke-width="1.1"/><line x1="894.6" y1="552.6" x2="908.0" y2="566.0" stroke="#fff" stroke-width="2.3"/><text x="759.6" y="544.0" fill="#fff" font-size="12.5" font-weight="bold" text-anchor="middle" font-family="Liberation Sans">0</text><text x="737.6" y="505.9" fill="#fff" font-size="12.5" font-weight="bold" text-anchor="middle" font-family="Liberation Sans">20</text><text x="737.6" y="461.9" fill="#fff" font-size="12.5" font-weight="bold" text-anchor="middle" font-family="Liberation Sans">40</text><text x="759.6" y="423.8" fill="#fff" font-size="12.5" font-weight="bold" text-anchor="middle" font-family="Liberation Sans">60</text><text x="797.7" y="401.8" fill="#fff" font-size="12.5" font-weight="bold" text-anchor="middle" font-family="Liberation Sans">80</text><text x="841.7" y="401.8" fill="#fff" font-size="12.5" font-weight="bold" text-anchor="middle" font-family="Liberation Sans">100</text><text x="879.8" y="423.8" fill="#fff" font-size="12.5" font-weight="bold" text-anchor="middle" font-family="Liberation Sans">120</text><text x="901.8" y="461.9" fill="#fff" font-size="12.5" font-weight="bold" text-anchor="middle" font-family="Liberation Sans">140</text><text x="901.8" y="505.9" fill="#fff" font-size="12.5" font-weight="bold" text-anchor="middle" font-family="Liberation Sans">160</text><text x="879.8" y="544.0" fill="#fff" font-size="12.5" font-weight="bold" text-anchor="middle" font-family="Liberation Sans">180</text><path d="M818.9 476.9L827.1 485.1L749.5 554.5z" fill="#f00"/><text x="825" y="556" fill="#fff" font-size="13" font-weight="bold" text-anchor="middle" letter-spacing="1.5" font-family="Liberation Sans">km/h</text><g stroke="#1d6a70" stroke-width="2" fill="none"><path d="M755 321h8q10 0 10 7.5t-10 7.5h-8z"/><path d="M744 323h8M744 327h8M744 331h8M744 335h8"/></g><path d="M716 321l8 7-8 7z" fill="#1a7a3a"/><rect x="715" y="632" width="22" height="16" fill="#c8d8e8"/><rect x="690.5" y="350.5" width="265" height="262" fill="none" stroke="#bbb" stroke-dasharray="1 2"/><rect x="820" y="347" width="6" height="6" fill="#fff" stroke="#000"/><rect x="952" y="347" width="6" height="6" fill="#fff" stroke="#000"/><rect x="952" y="478" width="6" height="6" fill="#fff" stroke="#000"/><rect x="820" y="609" width="6" height="6" fill="#fff" stroke="#000"/><rect x="952" y="609" width="6" height="6" fill="#fff" stroke="#000"/><rect x="938" y="344" width="11" height="11" fill="#fff" stroke="#000"/><path d="M942 346v7l4-3.5z" fill="#000"/></g><rect x="199" y="190" width="875" height="4" fill="#444"/><path d="M201 191.5H1074" stroke="#fff" stroke-width="1" stroke-dasharray="1 5"/></svg>
<div style="left:0;top:0;width:0;height:0;z-index:10;font-size:11.5px">
<div style="position:absolute;left:202px;top:210px;width:513px;height:680px;background:#0831d9;border-radius:7px 7px 0 0"></div>
<div style="position:absolute;left:202px;top:210px;width:513px;height:30px;background:linear-gradient(#3d95ff 0px,#0a6af0 3px,#0058e6 8px,#0055e5 20px,#0a5ff0 26px,#0050d8 30px);border-radius:7px 7px 0 0"></div>
<div style="position:absolute;left:205px;top:239px;width:507px;height:648px;background:#ece9d8"></div>
<div class="t wide" style="left:208px;top:217px;font-weight:bold;font-size:13px;color:#fff;text-shadow:1px 1px #0a1a6a"><span class="k">プロパテ</span><span class="ks">ィ</span></div>
<div style="position:absolute;left:689px;top:215px;width:21px;height:21px;background:linear-gradient(135deg,#f0a08a,#e05a36 45%,#c8401e);border:1px solid #fff;border-radius:3px"></div>
<svg style="position:absolute;left:693px;top:219px" width="13" height="13" viewBox="0 0 13 13"><path d="M2 2l9 9M11 2l-9 9" stroke="#fff" stroke-width="2.2"/></svg>
<div style="position:absolute;left:213px;top:264px;width:490px;height:587px;background:#fcfcfe;border:1px solid #919b9c"></div>
<div style="position:absolute;left:214px;top:265px;width:488px;height:585px;background:#eceadb"></div>
<div style="left:213px;top:244px;width:86px;height:21px;background:#fcfcfe;border:1px solid #919b9c;border-bottom:none;border-radius:3px 3px 0 0"></div>
<div style="position:absolute;left:214px;top:244px;width:84px;height:3px;background:#ffc83c;border-radius:2px 2px 0 0"></div>
<div style="position:absolute;left:217px;top:248px;width:78px;height:15px;border:1px dotted #000"></div>
<div class="t " style="left:220px;top:248px;">MeterProperty</div>
<div style="left:217px;top:280px;width:279px;height:147px;border:1px solid #d0d0bf;border-radius:4px"></div>
<div class="t" style="left:222px;top:273px;padding:0 2px;background:#eceadb;color:#0046d5">Basic</div>
<div class="t " style="left:224px;top:294px;">Value</div>
<div style="left:304px;top:290px;width:76px;height:21px;background:#fff;border:1px solid #7f9db9"></div>
<div class="t " style="left:307px;top:292px;color:#000">0</div>
<div class="t " style="left:224px;top:318px;">Max Value</div>
<div style="left:304px;top:314px;width:76px;height:21px;background:#fff;border:1px solid #7f9db9"></div>
<div class="t " style="left:307px;top:316px;color:#000">180</div>
<div class="t " style="left:224px;top:342px;">Min Value</div>
<div style="left:304px;top:338px;width:76px;height:21px;background:#fff;border:1px solid #7f9db9"></div>
<div class="t " style="left:307px;top:340px;color:#000">0</div>
<div style="left:400px;top:292px;width:13px;height:13px;background:linear-gradient(135deg,#dcdcd7,#fff);border:1px solid #1c5180"></div>
<svg style="position:absolute;left:402px;top:294px" width="9" height="9" viewBox="0 0 9 9"><path d="M1 4l2.5 3L8 1.5" fill="none" stroke="#21a121" stroke-width="2"/></svg>
<div class="t " style="left:416px;top:291px;">Enabled</div>
<div style="left:224px;top:370px;width:13px;height:13px;background:linear-gradient(135deg,#dcdcd7,#fff);border:1px solid #1c5180"></div>
<svg style="position:absolute;left:226px;top:372px" width="9" height="9" viewBox="0 0 9 9"><path d="M1 4l2.5 3L8 1.5" fill="none" stroke="#21a121" stroke-width="2"/></svg>
<div class="t " style="left:240px;top:369px;">OpAutoDecimation</div>
<div style="left:393px;top:363px;width:95px;height:23px;background:linear-gradient(#fff,#f4f3ee 60%,#e6e3d6);border:1px solid #003c74;border-radius:3px;box-shadow:inset 0 -2px 0 #d6d0c0;"></div>
<div class="t" style="left:393px;top:367px;width:95px;text-align:center">Help</div>
<div style="left:224px;top:391px;width:265px;height:25px;background:linear-gradient(#fff,#f4f3ee 60%,#e6e3d6);border:2px solid #0a1a3a;border-radius:2px;box-shadow:inset 0 -2px 0 #c8c4b4"></div>
<div class="t" style="left:224px;top:396px;width:265px;text-align:center">Hint for OpAutoDecimation</div>
<div style="left:504px;top:280px;width:185px;height:193px;border:1px solid #d0d0bf;border-radius:4px"></div>
<div class="t" style="left:509px;top:273px;padding:0 2px;background:#eceadb;color:#0046d5">Preview</div>
<svg style="position:absolute;left:0;top:0" width="720" height="480"><circle cx="596" cy="370" r="85.0" fill="#000" stroke="#858585" stroke-width="6"/><line x1="547.9" y1="418.1" x2="538.9" y2="427.1" stroke="#fff" stroke-width="2.3"/><line x1="538.0" y1="417.0" x2="533.2" y2="420.8" stroke="#fff" stroke-width="1.1"/><line x1="533.4" y1="410.6" x2="528.3" y2="414.0" stroke="#fff" stroke-width="1.1"/><line x1="529.5" y1="403.9" x2="524.0" y2="406.7" stroke="#fff" stroke-width="1.1"/><line x1="526.3" y1="396.7" x2="520.6" y2="398.9" stroke="#fff" stroke-width="1.1"/><line x1="530.3" y1="387.6" x2="518.0" y2="390.9" stroke="#fff" stroke-width="2.3"/><line x1="522.3" y1="381.7" x2="516.2" y2="382.6" stroke="#fff" stroke-width="1.1"/><line x1="521.5" y1="373.9" x2="515.3" y2="374.2" stroke="#fff" stroke-width="1.1"/><line x1="521.5" y1="366.1" x2="515.3" y2="365.8" stroke="#fff" stroke-width="1.1"/><line x1="522.3" y1="358.3" x2="516.2" y2="357.4" stroke="#fff" stroke-width="1.1"/><line x1="530.3" y1="352.4" x2="518.0" y2="349.1" stroke="#fff" stroke-width="2.3"/><line x1="526.3" y1="343.3" x2="520.6" y2="341.1" stroke="#fff" stroke-width="1.1"/><line x1="529.5" y1="336.1" x2="524.0" y2="333.3" stroke="#fff" stroke-width="1.1"/><line x1="533.4" y1="329.4" x2="528.3" y2="326.0" stroke="#fff" stroke-width="1.1"/><line x1="538.0" y1="323.0" x2="533.2" y2="319.2" stroke="#fff" stroke-width="1.1"/><line x1="547.9" y1="321.9" x2="538.9" y2="312.9" stroke="#fff" stroke-width="2.3"/><line x1="549.0" y1="312.0" x2="545.2" y2="307.2" stroke="#fff" stroke-width="1.1"/><line x1="555.4" y1="307.4" x2="552.0" y2="302.3" stroke="#fff" stroke-width="1.1"/><line x1="562.1" y1="303.5" x2="559.3" y2="298.0" stroke="#fff" stroke-width="1.1"/><line x1="569.3" y1="300.3" x2="567.1" y2="294.6" stroke="#fff" stroke-width="1.1"/><line x1="578.4" y1="304.3" x2="575.1" y2="292.0" stroke="#fff" stroke-width="2.3"/><line x1="584.3" y1="296.3" x2="583.4" y2="290.2" stroke="#fff" stroke-width="1.1"/><line x1="592.1" y1="295.5" x2="591.8" y2="289.3" stroke="#fff" stroke-width="1.1"/><line x1="599.9" y1="295.5" x2="600.2" y2="289.3" stroke="#fff" stroke-width="1.1"/><line x1="607.7" y1="296.3" x2="608.6" y2="290.2" stroke="#fff" stroke-width="1.1"/><line x1="613.6" y1="304.3" x2="616.9" y2="292.0" stroke="#fff" stroke-width="2.3"/><line x1="622.7" y1="300.3" x2="624.9" y2="294.6" stroke="#fff" stroke-width="1.1"/><line x1="629.9" y1="303.5" x2="632.7" y2="298.0" stroke="#fff" stroke-width="1.1"/><line x1="636.6" y1="307.4" x2="640.0" y2="302.3" stroke="#fff" stroke-width="1.1"/><line x1="643.0" y1="312.0" x2="646.8" y2="307.2" stroke="#fff" stroke-width="1.1"/><line x1="644.1" y1="321.9" x2="653.1" y2="312.9" stroke="#fff" stroke-width="2.3"/><line x1="654.0" y1="323.0" x2="658.8" y2="319.2" stroke="#fff" stroke-width="1.1"/><line x1="658.6" y1="329.4" x2="663.7" y2="326.0" stroke="#fff" stroke-width="1.1"/><line x1="662.5" y1="336.1" x2="668.0" y2="333.3" stroke="#fff" stroke-width="1.1"/><line x1="665.7" y1="343.3" x2="671.4" y2="341.1" stroke="#fff" stroke-width="1.1"/><line x1="661.7" y1="352.4" x2="674.0" y2="349.1" stroke="#fff" stroke-width="2.3"/><line x1="669.7" y1="358.3" x2="675.8" y2="357.4" stroke="#fff" stroke-width="1.1"/><line x1="670.5" y1="366.1" x2="676.7" y2="365.8" stroke="#fff" stroke-width="1.1"/><line x1="670.5" y1="373.9" x2="676.7" y2="374.2" stroke="#fff" stroke-width="1.1"/><line x1="669.7" y1="381.7" x2="675.8" y2="382.6" stroke="#fff" stroke-width="1.1"/><line x1="661.7" y1="387.6" x2="674.0" y2="390.9" stroke="#fff" stroke-width="2.3"/><line x1="665.7" y1="396.7" x2="671.4" y2="398.9" stroke="#fff" stroke-width="1.1"/><line x1="662.5" y1="403.9" x2="668.0" y2="406.7" stroke="#fff" stroke-width="1.1"/><line x1="658.6" y1="410.6" x2="663.7" y2="414.0" stroke="#fff" stroke-width="1.1"/><line x1="654.0" y1="417.0" x2="658.8" y2="420.8" stroke="#fff" stroke-width="1.1"/><line x1="644.1" y1="418.1" x2="653.1" y2="427.1" stroke="#fff" stroke-width="2.3"/><text x="554.1" y="413.4" fill="#fff" font-size="11" font-weight="bold" text-anchor="middle" font-family="Liberation Sans">0</text><text x="539.3" y="387.7" fill="#fff" font-size="11" font-weight="bold" text-anchor="middle" font-family="Liberation Sans">20</text><text x="539.3" y="358.0" fill="#fff" font-size="11" font-weight="bold" text-anchor="middle" font-family="Liberation Sans">40</text><text x="554.1" y="332.3" fill="#fff" font-size="11" font-weight="bold" text-anchor="middle" font-family="Liberation Sans">60</text><text x="579.8" y="317.4" fill="#fff" font-size="11" font-weight="bold" text-anchor="middle" font-family="Liberation Sans">80</text><text x="609.6" y="317.4" fill="#fff" font-size="11" font-weight="bold" text-anchor="middle" font-family="Liberation Sans">100</text><text x="635.3" y="332.3" fill="#fff" font-size="11" font-weight="bold" text-anchor="middle" font-family="Liberation Sans">120</text><text x="650.1" y="358.0" fill="#fff" font-size="11" font-weight="bold" text-anchor="middle" font-family="Liberation Sans">140</text><text x="650.1" y="387.7" fill="#fff" font-size="11" font-weight="bold" text-anchor="middle" font-family="Liberation Sans">160</text><text x="635.3" y="413.4" fill="#fff" font-size="11" font-weight="bold" text-anchor="middle" font-family="Liberation Sans">180</text><path d="M593.2 367.2L598.8 372.8L543.0 423.0z" fill="#f00"/></svg>
<div style="left:217px;top:441px;width:231px;height:89px;border:1px solid #d0d0bf;border-radius:4px"></div>
<div class="t" style="left:222px;top:434px;padding:0 2px;background:#eceadb;color:#0046d5">Caption</div>
<div class="t " style="left:224px;top:455px;">Caption</div>
<div style="left:272px;top:450px;width:164px;height:22px;background:#fff;border:1px solid #7f9db9"></div>
<div class="t " style="left:224px;top:481px;">Font</div>
<div style="left:272px;top:477px;width:129px;height:23px;background:#fff;border:1px solid #000"></div>
<div class="t " style="left:275px;top:479px;color:#a0a0a0">MS P<span class="k">ゴシ</span><span class="ks">ッ</span><span class="k">ク</span></div>
<div style="left:408px;top:480px;width:25px;height:17px;background:linear-gradient(#fff,#f4f3ee 60%,#e6e3d6);border:1px solid #003c74;border-radius:3px;box-shadow:inset 0 -2px 0 #d6d0c0;"></div>
<div class="t " style="left:416px;top:484px;font-size:9px;letter-spacing:-0.5px">...</div>
<div class="t " style="left:224px;top:507px;">Color</div>
<div style="left:272px;top:506px;width:129px;height:19px;background:#000;border:1px solid #000"></div>
<div style="left:408px;top:507px;width:25px;height:17px;background:linear-gradient(#fff,#f4f3ee 60%,#e6e3d6);border:1px solid #003c74;border-radius:3px;box-shadow:inset 0 -2px 0 #d6d0c0;"></div>
<div class="t " style="left:416px;top:511px;font-size:9px;letter-spacing:-0.5px">...</div>
<div style="left:217px;top:545px;width:231px;height:87px;border:1px solid #d0d0bf;border-radius:4px"></div>
<div class="t" style="left:222px;top:538px;padding:0 2px;background:#eceadb;color:#0046d5">Long Scale</div>
<div class="t " style="left:224px;top:560px;">Number of scale(2-51)</div>
<div style="left:352px;top:556px;width:84px;height:22px;background:#fff;border:1px solid #7f9db9"></div>
<div class="t " style="left:355px;top:558px;color:#000">10</div>
<div class="t " style="left:224px;top:584px;">Width(1-30)</div>
<div style="left:352px;top:580px;width:84px;height:22px;background:#fff;border:1px solid #7f9db9"></div>
<div class="t " style="left:355px;top:582px;color:#000">2</div>
<div class="t " style="left:224px;top:612px;">Color</div>
<div style="left:272px;top:610px;width:129px;height:19px;background:#fff;border:1px solid #000"></div>
<div style="left:409px;top:611px;width:23px;height:16px;background:linear-gradient(#fff,#f4f3ee 60%,#e6e3d6);border:1px solid #003c74;border-radius:3px;box-shadow:inset 0 -2px 0 #d6d0c0;"></div>
<div class="t " style="left:416px;top:615px;font-size:9px;letter-spacing:-0.5px">...</div>
<div style="left:217px;top:649px;width:231px;height:85px;border:1px solid #d0d0bf;border-radius:4px"></div>
<div class="t" style="left:222px;top:642px;padding:0 2px;background:#eceadb;color:#0046d5">Short Scale</div>
<div class="t " style="left:224px;top:659px;">Number of scale(0-49)</div>
<div style="left:352px;top:657px;width:84px;height:22px;background:#fff;border:1px solid #7f9db9"></div>
<div class="t " style="left:355px;top:659px;color:#000">4</div>
<div class="t " style="left:224px;top:683px;">Width(1-20)</div>
<div style="left:352px;top:681px;width:84px;height:22px;background:#fff;border:1px solid #7f9db9"></div>
<div class="t " style="left:355px;top:683px;color:#000">1</div>
<div class="t " style="left:224px;top:712px;">Color</div>
<div style="left:272px;top:711px;width:129px;height:18px;background:#fff;border:1px solid #000"></div>
<div style="left:409px;top:712px;width:23px;height:16px;background:linear-gradient(#fff,#f4f3ee 60%,#e6e3d6);border:1px solid #003c74;border-radius:3px;box-shadow:inset 0 -2px 0 #d6d0c0;"></div>
<div class="t " style="left:416px;top:716px;font-size:9px;letter-spacing:-0.5px">...</div>
<div style="left:456px;top:488px;width:233px;height:115px;border:1px solid #d0d0bf;border-radius:4px"></div>
<div class="t" style="left:461px;top:481px;padding:0 2px;background:#eceadb;color:#0046d5">Number Label</div>
<div style="left:464px;top:501px;width:13px;height:13px;background:linear-gradient(135deg,#dcdcd7,#fff);border:1px solid #1c5180"></div>
<svg style="position:absolute;left:466px;top:503px" width="9" height="9" viewBox="0 0 9 9"><path d="M1 4l2.5 3L8 1.5" fill="none" stroke="#21a121" stroke-width="2"/></svg>
<div class="t " style="left:480px;top:500px;">Show</div>
<div class="t " style="left:464px;top:520px;">Point Figures(0-10)</div>
<div style="left:593px;top:514px;width:83px;height:22px;background:#fff;border:1px solid #7f9db9"></div>
<div class="t " style="left:596px;top:516px;color:#000">0</div>
<div class="t " style="left:464px;top:547px;">Font</div>
<div style="left:520px;top:543px;width:121px;height:24px;background:#fff;border:1px solid #000"></div>
<div class="t " style="left:523px;top:545px;color:#a0a0a0">MS P<span class="k">ゴシ</span><span class="ks">ッ</span><span class="k">ク</span></div>
<div style="left:649px;top:547px;width:23px;height:16px;background:linear-gradient(#fff,#f4f3ee 60%,#e6e3d6);border:1px solid #003c74;border-radius:3px;box-shadow:inset 0 -2px 0 #d6d0c0;"></div>
<div class="t " style="left:656px;top:551px;font-size:9px;letter-spacing:-0.5px">...</div>
<div class="t " style="left:464px;top:575px;">Color</div>
<div style="left:520px;top:573px;width:121px;height:20px;background:#fff;border:1px solid #000"></div>
<div style="left:649px;top:576px;width:23px;height:16px;background:linear-gradient(#fff,#f4f3ee 60%,#e6e3d6);border:1px solid #003c74;border-radius:3px;box-shadow:inset 0 -2px 0 #d6d0c0;"></div>
<div class="t " style="left:656px;top:580px;font-size:9px;letter-spacing:-0.5px">...</div>
<div style="left:456px;top:617px;width:233px;height:124px;border:1px solid #d0d0bf;border-radius:4px"></div>
<div class="t" style="left:461px;top:610px;padding:0 2px;background:#eceadb;color:#0046d5">Point</div>
<div class="t " style="left:464px;top:628px;">Length ( 0 - 100 )</div>
<div style="left:593px;top:625px;width:83px;height:21px;background:#fff;border:1px solid #7f9db9"></div>
<div class="t " style="left:596px;top:627px;color:#000">80</div>
<div class="t " style="left:464px;top:652px;">Color</div>
<div style="left:520px;top:650px;width:121px;height:20px;background:#f00;border:1px solid #000"></div>
<div style="left:649px;top:652px;width:23px;height:16px;background:linear-gradient(#fff,#f4f3ee 60%,#e6e3d6);border:1px solid #003c74;border-radius:3px;box-shadow:inset 0 -2px 0 #d6d0c0;"></div>
<div class="t " style="left:656px;top:656px;font-size:9px;letter-spacing:-0.5px">...</div>
<div class="t " style="left:464px;top:677px;">MinAngle ( 0 - 360 )</div>
<div style="left:593px;top:674px;width:83px;height:22px;background:#fff;border:1px solid #7f9db9"></div>
<div class="t " style="left:596px;top:676px;color:#000">45</div>
<div class="t " style="left:464px;top:700px;">MaxAngle( 0 - 360 )</div>
<div style="left:593px;top:698px;width:83px;height:21px;background:#fff;border:1px solid #7f9db9"></div>
<div class="t " style="left:596px;top:700px;color:#000">315</div>
<div style="left:464px;top:718px;width:13px;height:13px;background:linear-gradient(135deg,#dcdcd7,#fff);border:1px solid #1c5180"></div>
<svg style="position:absolute;left:466px;top:720px" width="9" height="9" viewBox="0 0 9 9"><path d="M1 4l2.5 3L8 1.5" fill="none" stroke="#21a121" stroke-width="2"/></svg>
<div class="t " style="left:480px;top:717px;">Turn clockwise</div>
<div style="left:217px;top:752px;width:472px;height:91px;border:1px solid #d0d0bf;border-radius:4px"></div>
<div class="t" style="left:222px;top:745px;padding:0 2px;background:#eceadb;color:#0046d5">Base</div>
<div class="t " style="left:224px;top:761px;">Border Width(1-20)</div>
<div style="left:352px;top:758px;width:84px;height:22px;background:#fff;border:1px solid #7f9db9"></div>
<div class="t " style="left:355px;top:760px;color:#000">5</div>
<div class="t " style="left:440px;top:762px;">Base color</div>
<div style="left:520px;top:759px;width:121px;height:20px;background:#000;border:1px solid #000"></div>
<div style="left:649px;top:762px;width:23px;height:16px;background:linear-gradient(#fff,#f4f3ee 60%,#e6e3d6);border:1px solid #003c74;border-radius:3px;box-shadow:inset 0 -2px 0 #d6d0c0;"></div>
<div class="t " style="left:656px;top:766px;font-size:9px;letter-spacing:-0.5px">...</div>
<div class="t " style="left:224px;top:790px;">Picture file</div>
<div class="t " style="left:440px;top:788px;">Border color</div>
<div style="left:520px;top:786px;width:121px;height:20px;background:#808080;border:1px solid #000"></div>
<div style="left:649px;top:789px;width:23px;height:16px;background:linear-gradient(#fff,#f4f3ee 60%,#e6e3d6);border:1px solid #003c74;border-radius:3px;box-shadow:inset 0 -2px 0 #d6d0c0;"></div>
<div class="t " style="left:656px;top:793px;font-size:9px;letter-spacing:-0.5px">...</div>
<div style="left:224px;top:810px;width:417px;height:22px;background:#fff;border:1px solid #7f9db9"></div>
<div style="left:649px;top:813px;width:23px;height:16px;background:linear-gradient(#fff,#f4f3ee 60%,#e6e3d6);border:1px solid #003c74;border-radius:3px;box-shadow:inset 0 -2px 0 #d6d0c0;"></div>
<div class="t " style="left:656px;top:817px;font-size:9px;letter-spacing:-0.5px">...</div>
<div style="left:430px;top:861px;width:86px;height:19px;background:linear-gradient(#fff,#f4f3ee 60%,#e6e3d6);border:1px solid #003c74;border-radius:3px;box-shadow:inset 0 0 0 1px #6a8ad8,inset 0 -2px 0 1px #88a8e8;"></div>
<div class="t" style="left:430px;top:863px;width:86px;text-align:center">OK</div>
<div style="left:525px;top:861px;width:86px;height:19px;background:linear-gradient(#fff,#f4f3ee 60%,#e6e3d6);border:1px solid #003c74;border-radius:3px;box-shadow:inset 0 -2px 0 #d6d0c0;"></div>
<div class="t" style="left:525px;top:863px;width:86px;text-align:center">キャンセル</div>
<div style="left:619px;top:861px;width:86px;height:19px;background:linear-gradient(#fff,#f4f3ee 60%,#e6e3d6);border:1px solid #003c74;border-radius:3px;box-shadow:inset 0 -2px 0 #d6d0c0;"></div>
<div class="t" style="left:619px;top:863px;width:86px;text-align:center">適用(<u>A</u>)</div>
</div>
<div style="position:absolute;left:5px;top:740px;width:1088px;height:19px;background:#d5d1c3"></div>
<div class="t " style="left:9px;top:742px;"><span class="h">出力</span></div>
<svg style="position:absolute;left:1047px;top:747px" width="9" height="6" viewBox="0 0 9 6"><path d="M0 0h9l-4.5 5z" fill="#000"/></svg>
<svg style="position:absolute;left:1063px;top:743px" width="9" height="13" viewBox="0 0 9 13"><path d="M2 1h5v7H2z" fill="none" stroke="#000" stroke-width="1.5"/><path d="M0 8h9M4.5 8v5" stroke="#000" stroke-width="1.5"/><path d="M5 2v5" stroke="#000"/></svg>
<svg style="position:absolute;left:1078px;top:744px" width="11" height="11" viewBox="0 0 11 11"><path d="M1 1l9 9M10 1l-9 9" stroke="#000" stroke-width="1.8"/></svg>
<div style="position:absolute;left:5px;top:757px;width:1088px;height:27px;background:linear-gradient(#fbfaf6,#f2f0e6 50%,#d9d5c3)"></div>
<div class="t " style="left:10px;top:764px;"><span class="h">出力元</span><span class="k">の</span><span class="h">表示</span>(<u>S</u>):</div>
<div style="position:absolute;left:105px;top:760px;width:380px;height:20px;background:#fff"></div>
<div class="t " style="left:108px;top:764px;"><span class="k">デバ</span><span class="ks">ッ</span><span class="k">グ</span></div>
<div style="position:absolute;left:5px;top:784px;width:1071px;height:186px;background:#c0c0c0"></div>
<div style="position:absolute;left:1076px;top:785px;width:15px;height:185px;background:linear-gradient(90deg,#f3f1ec,#fefefb)"></div>
<div style="left:1076px;top:785px;width:15px;height:15px;background:linear-gradient(135deg,#e3ebfd,#c5d5f8);border:1px solid #b7cbf5;border-radius:2px"></div>
<svg style="position:absolute;left:0;top:0;overflow:visible" width="1" height="1"><path d="M1079.5 794.5l4-4 4 4" fill="none" stroke="#4d6185" stroke-width="2"/></svg>
<div style="left:1076px;top:955px;width:15px;height:15px;background:linear-gradient(135deg,#e3ebfd,#c5d5f8);border:1px solid #b7cbf5;border-radius:2px"></div>
<svg style="position:absolute;left:0;top:0;overflow:visible" width="1" height="1"><path d="M1079.5 960.5l4 4 4-4" fill="none" stroke="#4d6185" stroke-width="2"/></svg>
<div style="left:1076px;top:938px;width:15px;height:15px;background:linear-gradient(90deg,#cad8fb,#bccff8 60%,#b3c6f3);border:1px solid #b1c5f3;border-radius:2px"></div>
<div style="position:absolute;left:5px;top:970px;width:1068px;height:15px;background:linear-gradient(#f3f1ec,#fefefb)"></div>
<div style="left:5px;top:970px;width:15px;height:15px;background:linear-gradient(135deg,#e3ebfd,#c5d5f8);border:1px solid #b7cbf5;border-radius:2px"></div>
<svg style="position:absolute;left:0;top:0;overflow:visible" width="1" height="1"><path d="M14.5 973.5l-4 4 4 4" fill="none" stroke="#4d6185" stroke-width="2"/></svg>
<div style="left:1058px;top:970px;width:15px;height:15px;background:linear-gradient(135deg,#e3ebfd,#c5d5f8);border:1px solid #b7cbf5;border-radius:2px"></div>
<svg style="position:absolute;left:0;top:0;overflow:visible" width="1" height="1"><path d="M1063.5 973.5l4 4-4 4" fill="none" stroke="#4d6185" stroke-width="2"/></svg>
<div style="left:22px;top:970px;width:687px;height:15px;background:linear-gradient(#cad8fb,#bccff8 60%,#b3c6f3);border:1px solid #b1c5f3;border-radius:2px"></div>
<div style="position:absolute;left:1073px;top:970px;width:18px;height:15px;background:#ece9d8"></div>
<div class="t om" style="left:15px;top:784px;font-family:'Liberation Mono',monospace;font-size:12px;letter-spacing:-1.2px;line-height:13px;color:#000">'System.MissingMethodException' <span class="h">の初回例外が</span> mscorlib.dll <span class="h">で発生しました。</span></div>
<div class="t om" style="left:15px;top:797px;font-family:'Liberation Mono',monospace;font-size:12px;letter-spacing:-1.2px;line-height:13px;color:#000">'System.MissingMethodException' <span class="h">の初回例外が</span> mscorlib.dll <span class="h">で発生しました。</span></div>
<div class="t om" style="left:15px;top:810px;font-family:'Liberation Mono',monospace;font-size:12px;letter-spacing:-1.2px;line-height:13px;color:#000">'System.MissingMethodException' <span class="h">の初回例外が</span> mscorlib.dll <span class="h">で発生しました。</span></div>
<div class="t om" style="left:15px;top:823px;font-family:'Liberation Mono',monospace;font-size:12px;letter-spacing:-1.2px;line-height:13px;color:#000">'System.MissingMethodException' <span class="h">の初回例外が</span> mscorlib.dll <span class="h">で発生しました。</span></div>
<div class="t om" style="left:15px;top:836px;font-family:'Liberation Mono',monospace;font-size:12px;letter-spacing:-1.2px;line-height:13px;color:#000">'System.MissingMethodException' <span class="h">の初回例外が</span> mscorlib.dll <span class="h">で発生しました。</span></div>
<div class="t om" style="left:15px;top:849px;font-family:'Liberation Mono',monospace;font-size:12px;letter-spacing:-1.2px;line-height:13px;color:#000">'System.MissingMethodException' <span class="h">の初回例外が</span> mscorlib.dll <span class="h">で発生しました。</span></div>
<div class="t om" style="left:15px;top:862px;font-family:'Liberation Mono',monospace;font-size:12px;letter-spacing:-1.2px;line-height:13px;color:#000">'System.Runtime.InteropServices.COMException' <span class="h">の初回例外が</span> System.Windows.Forms.dll <span class="h">で発生しました。</span></div>
<div class="t om" style="left:15px;top:875px;font-family:'Liberation Mono',monospace;font-size:12px;letter-spacing:-1.2px;line-height:13px;color:#000">'System.Runtime.InteropServices.COMException' <span class="h">の初回例外が</span> System.Windows.Forms.dll <span class="h">で発生しました。</span></div>
<div class="t om" style="left:15px;top:888px;font-family:'Liberation Mono',monospace;font-size:12px;letter-spacing:-1.2px;line-height:13px;color:#000">'System.Runtime.InteropServices.COMException' <span class="h">の初回例外が</span> System.Windows.Forms.dll <span class="h">で発生しました。</span></div>
<div class="t om" style="left:15px;top:901px;font-family:'Liberation Mono',monospace;font-size:12px;letter-spacing:-1.2px;line-height:13px;color:#000">'System.Runtime.InteropServices.COMException' <span class="h">の初回例外が</span> System.Windows.Forms.dll <span class="h">で発生しました。</span></div>
<div class="t om" style="left:15px;top:914px;font-family:'Liberation Mono',monospace;font-size:12px;letter-spacing:-1.2px;line-height:13px;color:#000"><span class="h">スレッド</span> 0x1228 <span class="h">はコード</span> 0 (0x0) <span class="h">で終了しました。</span></div>
<div class="t om" style="left:15px;top:927px;font-family:'Liberation Mono',monospace;font-size:12px;letter-spacing:-1.2px;line-height:13px;color:#000"><span class="h">スレッド</span> 0x9ec <span class="h">はコード</span> 0 (0x0) <span class="h">で終了しました。</span></div>
<div class="t om" style="left:15px;top:940px;font-family:'Liberation Mono',monospace;font-size:12px;letter-spacing:-1.2px;line-height:13px;color:#000"><span class="h">プログラム</span> '[4876] template_vb2003.vshost.exe: <span class="h">マネージ</span>' <span class="h">はコード</span> 0 (0x0) <span class="h">で終了しました。</span></div>
<div style="position:absolute;left:4px;top:985px;width:1089px;height:6px;background:#fff;border-top:1px solid #b8b5a6;border-bottom:1px solid #a5a292"></div>
<div style="position:absolute;left:4px;top:991px;width:1089px;height:21px;background:#f2f0e7"></div>
<div style="position:absolute;left:428px;top:990px;width:48px;height:21px;background:#fcfcfa;border:1px solid #a5a292;border-top:none;border-radius:0 0 3px 3px"></div>
<svg style="position:absolute;left:7px;top:992px" width="16" height="16" viewBox="0 0 16 16"><rect x="0.5" y="1.5" width="13" height="12" fill="#fff8d8" stroke="#3a5a98"/><rect x="1" y="2" width="12" height="2" fill="#6a8ad8"/><path d="M3 6h4v4H3z" fill="#f0c020"/><rect x="8" y="9" width="7" height="6" fill="#2a2a6a"/></svg>
<div class="t " style="left:24px;top:992px;color:#444"><span class="k">コ</span><span class="h">ー</span><span class="k">ド</span><span class="h">定義</span><span class="k">ウ</span><span class="ks">ィ</span><span class="k">ンドウ</span></div>
<svg style="position:absolute;left:125px;top:992px" width="16" height="16" viewBox="0 0 16 16"><path d="M3 1v6M1 5l2 2 2-2M3 15V9M1 11l2-2 2 2" stroke="#2a4ab8" fill="none" stroke-width="1.3"/><rect x="6.5" y="3.5" width="9" height="9" fill="#fff" stroke="#2a4ab8"/><path d="M8 6.5h6M8 8.5h6M8 10.5h6" stroke="#2a4ab8"/></svg>
<div class="t " style="left:142px;top:992px;color:#444"><span class="h">呼</span><span class="k">び</span><span class="h">出</span><span class="k">しブラウザ</span></div>
<svg style="position:absolute;left:227px;top:992px" width="16" height="16" viewBox="0 0 16 16"><rect x="0.5" y="1.5" width="13" height="10" fill="#fff" stroke="#3a5a98"/><rect x="1" y="2" width="12" height="2" fill="#6a8ad8"/><path d="M3 6.5h8M3 8.5h8" stroke="#3a5a98"/><circle cx="10" cy="13" r="2" fill="#333"/><circle cx="14" cy="13" r="2" fill="#333"/></svg>
<div class="t " style="left:245px;top:992px;color:#444"><span class="h">検索結果</span> 1</div>
<svg style="position:absolute;left:310px;top:992px" width="16" height="16" viewBox="0 0 16 16"><rect x="5" y="0" width="9" height="7" fill="#c8d8f0" stroke="#3a5a98"/><path d="M6 4l3-3 2 3z" fill="#f0a020"/><circle cx="4" cy="12" r="2.5" fill="#333"/><circle cx="10" cy="12" r="2.5" fill="#333"/><path d="M4 9h6" stroke="#333" stroke-width="2"/></svg>
<div class="t " style="left:325px;top:992px;color:#444"><span class="k">シンボルの</span><span class="h">検索結果</span></div>
<svg style="position:absolute;left:431px;top:992px" width="16" height="16" viewBox="0 0 16 16"><rect x="0.5" y="1.5" width="13" height="13" fill="#fff" stroke="#3a5a98"/><path d="M3 4.5h8M3 6.5h8M3 8.5h8M3 10.5h8M3 12.5h6" stroke="#3a5a98"/></svg>
<div class="t " style="left:447px;top:992px;"><span class="h">出力</span></div>
<svg style="position:absolute;left:479px;top:992px" width="16" height="16" viewBox="0 0 16 16"><path d="M2 15V7M5 15V3M8 15V9M11 15V5M14 15V10" stroke="#2a4ab8" stroke-width="2"/><path d="M3.5 15V11M9.5 15V6" stroke="#d82020" stroke-width="1.5"/><path d="M1 15.5h15" stroke="#222"/></svg>
<div class="t " style="left:495px;top:992px;color:#444"><span class="k">カバレ</span><span class="ks">ッ</span><span class="k">ジ</span></div>
<svg style="position:absolute;left:549px;top:992px" width="16" height="16" viewBox="0 0 16 16"><path d="M12 4A6 6 0 1 0 12 12" fill="none" stroke="#5a6a30" stroke-width="3.5"/><path d="M9 6h6M9 10h6M11 4v8M13.5 4v8" stroke="#1a2a8a" stroke-width="1.4"/></svg>
<div class="t " style="left:565px;top:992px;color:#444">C++test</div>
<div style="left:122px;top:993px;width:2px;height:16px;border-left:1px solid #c5c2b2;border-right:1px solid #fff"></div>
<div style="left:224px;top:993px;width:2px;height:16px;border-left:1px solid #c5c2b2;border-right:1px solid #fff"></div>
<div style="left:305px;top:993px;width:2px;height:16px;border-left:1px solid #c5c2b2;border-right:1px solid #fff"></div>
<div style="left:477px;top:993px;width:2px;height:16px;border-left:1px solid #c5c2b2;border-right:1px solid #fff"></div>
<div style="left:545px;top:993px;width:2px;height:16px;border-left:1px solid #c5c2b2;border-right:1px solid #fff"></div>
<div style="position:absolute;left:4px;top:1011px;width:1426px;height:1px;background:#aca899"></div>
<div style="position:absolute;left:4px;top:1012px;width:1426px;height:24px;background:#ebe8d8"></div>
<div class="t " style="left:12px;top:1018px;"><span class="k">コマンド</span></div>
<div style="position:absolute;left:1097px;top:122px;width:333px;height:411px;background:linear-gradient(90deg,#f1efe5,#e4e1d0 95%);border:1px solid #a5a292;border-top:none"></div>
<div style="position:absolute;left:1413px;top:125px;width:15px;height:405px;background:linear-gradient(90deg,#f3f1ec,#fefefb)"></div>
<div style="left:1413px;top:125px;width:15px;height:15px;background:linear-gradient(135deg,#e3ebfd,#c5d5f8);border:1px solid #b7cbf5;border-radius:2px"></div>
<svg style="position:absolute;left:0;top:0;overflow:visible" width="1" height="1"><path d="M1416.5 134.5l4-4 4 4" fill="none" stroke="#4d6185" stroke-width="2"/></svg>
<div style="left:1413px;top:515px;width:15px;height:15px;background:linear-gradient(135deg,#e3ebfd,#c5d5f8);border:1px solid #b7cbf5;border-radius:2px"></div>
<svg style="position:absolute;left:0;top:0;overflow:visible" width="1" height="1"><path d="M1416.5 520.5l4 4 4-4" fill="none" stroke="#4d6185" stroke-width="2"/></svg>
<div style="left:1413px;top:351px;width:15px;height:130px;background:linear-gradient(90deg,#cad8fb,#bccff8 60%,#b3c6f3);border:1px solid #b1c5f3;border-radius:2px"></div>
<svg style="position:absolute;left:1106px;top:115px" width="17" height="17" viewBox="0 0 17 17"><text x="0" y="10" font-size="13" font-weight="bold" fill="#1a1ae0" font-family="Liberation Sans">Op</text></svg>
<div class="t " style="left:1127px;top:116px;font-size:11.3px">Open PLATE Form Tag</div>
<svg style="position:absolute;left:1106px;top:135px" width="17" height="17" viewBox="0 0 17 17"><text x="2" y="14" font-size="15" font-weight="bold" fill="#1a1ae0" font-family="Liberation Sans">R</text></svg>
<div class="t " style="left:1127px;top:136px;font-size:11.3px">Open PLATE Receive Control</div>
<svg style="position:absolute;left:1106px;top:155px" width="17" height="17" viewBox="0 0 17 17"><text x="2" y="14" font-size="15" font-weight="bold" fill="#1a1ae0" font-family="Liberation Sans">S</text></svg>
<div class="t " style="left:1127px;top:156px;font-size:11.3px">Open PLATE Send Control</div>
<svg style="position:absolute;left:1106px;top:175px" width="17" height="17" viewBox="0 0 17 17"><rect x="1" y="5" width="15" height="6" rx="1" fill="#8a8a8a" stroke="#444"/></svg>
<div class="t " style="left:1127px;top:176px;font-size:11.3px">RtlabAllInOne.RT7segLED</div>
<svg style="position:absolute;left:1106px;top:195px" width="17" height="17" viewBox="0 0 17 17"><rect x="1" y="6" width="15" height="5" rx="2" fill="#1a3ae0"/><rect x="6" y="3" width="4" height="11" fill="#1a3ae0"/></svg>
<div class="t " style="left:1127px;top:196px;font-size:11.3px">RtlabAllInOne.RTCSVSender</div>
<svg style="position:absolute;left:1106px;top:215px" width="17" height="17" viewBox="0 0 17 17"><rect x="3" y="1" width="11" height="15" fill="#111"/><path d="M7 10l4-4" stroke="#e02020"/></svg>
<div class="t " style="left:1127px;top:216px;font-size:11.3px">RtlabAllInOne.RTFerrari</div>
<svg style="position:absolute;left:1106px;top:235px" width="17" height="17" viewBox="0 0 17 17"><rect x="6" y="1" width="4" height="15" fill="#1a3ae0"/><rect x="4" y="6" width="8" height="5" fill="#1a3ae0"/></svg>
<div class="t " style="left:1127px;top:236px;font-size:11.3px">RtlabAllInOne.RTFuelMeter</div>
<svg style="position:absolute;left:1106px;top:255px" width="17" height="17" viewBox="0 0 17 17"><rect x="1" y="2" width="15" height="13" fill="#fafafa"/><path d="M1 2h15" stroke="#333"/></svg>
<div class="t " style="left:1127px;top:256px;font-size:11.3px">RtlabAllInOne.RTHSlider</div>
<svg style="position:absolute;left:1106px;top:275px" width="17" height="17" viewBox="0 0 17 17"><rect x="1" y="6" width="4" height="4" fill="#e02020"/><rect x="6" y="6" width="4" height="4" fill="#e02020"/><rect x="11" y="6" width="5" height="4" fill="#e02020"/></svg>
<div class="t " style="left:1127px;top:276px;font-size:11.3px">RtlabAllInOne.RTLEDBar</div>
<svg style="position:absolute;left:1106px;top:295px" width="17" height="17" viewBox="0 0 17 17"><circle cx="8.5" cy="8.5" r="7" fill="#111"/><path d="M6 11l3-3" stroke="#e02020"/></svg>
<div class="t " style="left:1127px;top:296px;font-size:11.3px">RtlabAllInOne.RTLEDlamp</div>
<svg style="position:absolute;left:1106px;top:315px" width="17" height="17" viewBox="0 0 17 17"><text x="1" y="8.7" font-size="8" font-weight="bold" fill="#f00000" font-family="Liberation Sans" transform="scale(1,1.5)" textLength="15" lengthAdjust="spacingAndGlyphs">CSV</text></svg>
<div class="t " style="left:1127px;top:316px;font-size:11.3px">RtlabAllInOne.RTMeter</div>
<svg style="position:absolute;left:1106px;top:335px" width="17" height="17" viewBox="0 0 17 17"><rect x="0.5" y="0.5" width="15" height="15" fill="#c8c8c8" stroke="#e02020"/><circle cx="8" cy="8" r="6" fill="#111"/><path d="M6 10l3-3" stroke="#e02020"/></svg>
<div class="t " style="left:1127px;top:336px;font-size:11.3px">RtlabAllInOne.RTMeterEx</div>
<svg style="position:absolute;left:1106px;top:355px" width="17" height="17" viewBox="0 0 17 17"><rect x="1" y="5" width="15" height="6" rx="1" fill="#8a8a8a" stroke="#444"/></svg>
<div class="t " style="left:1127px;top:356px;font-size:11.3px">RtlabAllInOne.RTMPushButton</div>
<svg style="position:absolute;left:1106px;top:375px" width="17" height="17" viewBox="0 0 17 17"><circle cx="8.5" cy="8.5" r="7" fill="#777" stroke="#20a020" stroke-dasharray="2 2"/><circle cx="4" cy="5" r="2" fill="#e02020"/></svg>
<div class="t " style="left:1127px;top:376px;font-size:11.3px">RtlabAllInOne.RTMsgBoard</div>
<svg style="position:absolute;left:1106px;top:395px" width="17" height="17" viewBox="0 0 17 17"><rect x="1" y="6" width="4" height="4" fill="#e02020"/><rect x="6" y="6" width="4" height="4" fill="#e02020"/><rect x="11" y="6" width="5" height="4" fill="#e02020"/></svg>
<div class="t " style="left:1127px;top:396px;font-size:11.3px">RtlabAllInOne.RTOscilloScope</div>
<svg style="position:absolute;left:1106px;top:415px" width="17" height="17" viewBox="0 0 17 17"><circle cx="8.5" cy="8.5" r="7" fill="#111"/><path d="M5 12l5-5" stroke="#e02020" stroke-width="1.5"/></svg>
<div class="t " style="left:1127px;top:416px;font-size:11.3px">RtlabAllInOne.RTRoundInput</div>
<svg style="position:absolute;left:1106px;top:435px" width="17" height="17" viewBox="0 0 17 17"><circle cx="8.5" cy="8.5" r="7" fill="#777" stroke="#20a020" stroke-dasharray="2 2"/><text x="7" y="15" font-size="11" font-weight="bold" fill="#e02020" font-family="Liberation Sans">E</text></svg>
<div class="t " style="left:1127px;top:436px;font-size:11.3px">RtlabAllInOne.RTRoundInputEx</div>
<svg style="position:absolute;left:1106px;top:455px" width="17" height="17" viewBox="0 0 17 17"><rect x="5" y="1" width="7" height="15" fill="#e8e8c0" stroke="#666"/><rect x="7" y="6" width="3" height="5" fill="#333"/></svg>
<div class="t " style="left:1127px;top:456px;font-size:11.3px">RtlabAllInOne.RTSpeedMeter</div>
<svg style="position:absolute;left:1106px;top:475px" width="17" height="17" viewBox="0 0 17 17"><rect x="2" y="1" width="13" height="15" fill="#111"/><path d="M5 12l6-3" stroke="#e02020"/></svg>
<div class="t " style="left:1127px;top:476px;font-size:11.3px">RtlabAllInOne.RTSwitch</div>
<svg style="position:absolute;left:1106px;top:495px" width="17" height="17" viewBox="0 0 17 17"><path d="M4 2h9v6H4zM4 8h9v7H4z" fill="none" stroke="#e02020" stroke-width="2"/></svg>
<div class="t " style="left:1127px;top:496px;font-size:11.3px">RtlabAllInOne.RTTacoMeter</div>
<svg style="position:absolute;left:1106px;top:515px" width="17" height="17" viewBox="0 0 17 17"><circle cx="8.5" cy="8.5" r="7" fill="#111"/><path d="M8 12l2-6" stroke="#e02020"/></svg>
<div class="t " style="left:1127px;top:516px;font-size:11.3px">RtlabAllInOne.RTTempMeter</div>
<div style="position:absolute;left:1098px;top:104px;width:332px;height:19px;background:#d5d1c3"></div>
<div class="t " style="left:1102px;top:106px;"><span class="k">ツ</span><span class="h">ー</span><span class="k">ルボ</span><span class="ks">ッ</span><span class="k">クス</span></div>
<svg style="position:absolute;left:1384px;top:111px" width="9" height="6" viewBox="0 0 9 6"><path d="M0 0h9l-4.5 5z" fill="#000"/></svg>
<svg style="position:absolute;left:1400px;top:107px" width="9" height="13" viewBox="0 0 9 13"><path d="M2 1h5v7H2z" fill="none" stroke="#000" stroke-width="1.5"/><path d="M0 8h9M4.5 8v5" stroke="#000" stroke-width="1.5"/><path d="M5 2v5" stroke="#000"/></svg>
<svg style="position:absolute;left:1415px;top:108px" width="11" height="11" viewBox="0 0 11 11"><path d="M1 1l9 9M10 1l-9 9" stroke="#000" stroke-width="1.8"/></svg>
<div style="position:absolute;left:1097px;top:533px;width:333px;height:25px;background:#f2f0e7;border-top:1px solid #a5a292"></div>
<div style="position:absolute;left:1228px;top:533px;width:88px;height:21px;background:#fcfcfa;border:1px solid #a5a292;border-top:none;border-radius:0 0 3px 3px"></div>
<svg style="position:absolute;left:1101px;top:536px" width="16" height="16" viewBox="0 0 16 16"><rect x="0" y="2" width="10" height="8" fill="#8ab0e8" stroke="#3a5a98"/><rect x="5" y="6" width="10" height="8" fill="#b8d0f0" stroke="#3a5a98"/></svg>
<div class="t " style="left:1118px;top:536px;color:#777;transform:scaleX(0.95);transform-origin:0 0"><span class="k">サ</span><span class="h">ー</span><span class="k">バ</span><span class="h">ー</span> <span class="k">エクスプロ</span><span class="h">ー</span><span class="k">ラ</span></div>
<svg style="position:absolute;left:1230px;top:536px" width="16" height="16" viewBox="0 0 16 16"><path d="M2 15L13 3" stroke="#b82020" stroke-width="2.5"/><path d="M15 15L4 3" stroke="#777" stroke-width="2.5"/></svg>
<div class="t " style="left:1247px;top:536px;"><span class="k">ツ</span><span class="h">ー</span><span class="k">ルボ</span><span class="ks">ッ</span><span class="k">クス</span></div>
<div style="position:absolute;left:1098px;top:560px;width:332px;height:19px;background:#d5d1c3"></div>
<div class="t " style="left:1102px;top:562px;"><span class="k">プロパテ</span><span class="ks">ィ</span></div>
<svg style="position:absolute;left:1384px;top:567px" width="9" height="6" viewBox="0 0 9 6"><path d="M0 0h9l-4.5 5z" fill="#000"/></svg>
<svg style="position:absolute;left:1400px;top:563px" width="9" height="13" viewBox="0 0 9 13"><path d="M2 1h5v7H2z" fill="none" stroke="#000" stroke-width="1.5"/><path d="M0 8h9M4.5 8v5" stroke="#000" stroke-width="1.5"/><path d="M5 2v5" stroke="#000"/></svg>
<svg style="position:absolute;left:1415px;top:564px" width="11" height="11" viewBox="0 0 11 11"><path d="M1 1l9 9M10 1l-9 9" stroke="#000" stroke-width="1.8"/></svg>
<div style="position:absolute;left:1097px;top:578px;width:333px;height:22px;background:#fff;border:1px solid #ece9d8"></div>
<div class="t " style="left:1102px;top:584px;"><b style="font-size:12px">AxRTMeterEx1</b>&nbsp;&nbsp; AxRtlabAllInOne.AxRTMeterEx</div>
<div style="position:absolute;left:1412px;top:581px;width:14px;height:17px;background:#ece9d8"></div>
<svg style="position:absolute;left:1416px;top:589px" width="5" height="3" viewBox="0 0 5 3"><path d="M0 0h5l-2.5 3z" fill="#000"/></svg>
<div style="position:absolute;left:1097px;top:600px;width:333px;height:29px;background:linear-gradient(#fbfaf6,#efede3 50%,#d9d5c3)"></div>
<div style="position:absolute;left:1100px;top:603px;width:23px;height:23px;background:#e6e6e0;border:1px solid #316ac5"></div>
<svg style="position:absolute;left:1103px;top:606px" width="17" height="17" viewBox="0 0 17 17"><rect x="1.5" y="2.5" width="5" height="5" rx="1" fill="#fff" stroke="#5a7ab8"/><path d="M2.5 5h3M4 3.5v3" stroke="#000"/><rect x="1.5" y="10.5" width="5" height="5" rx="1" fill="#fff" stroke="#5a7ab8"/><path d="M2.5 13h3M4 11.5v3" stroke="#000"/><path d="M8 3.5h4M8 6.5h8M8 8.5h8M8 11.5h4M8 14.5h8" stroke="#777"/></svg>
<svg style="position:absolute;left:1126px;top:606px" width="17" height="17" viewBox="0 0 17 17"><text x="0" y="8" font-size="9" fill="#2a4ab8" font-weight="bold" font-family="Liberation Serif">A</text><text x="0.5" y="16" font-size="9" fill="#b83030" font-weight="bold" font-family="Liberation Serif">Z</text><path d="M12.5 1v13" stroke="#000" stroke-width="1.3"/><path d="M10 11l2.5 4 2.5-4z" fill="#000"/></svg>
<div style="left:1150px;top:606px;width:2px;height:17px;border-left:1px solid #c5c2b2;border-right:1px solid #fff"></div>
<div style="position:absolute;left:1152px;top:603px;width:23px;height:23px;background:#e6e6e0;border:1px solid #316ac5"></div>
<svg style="position:absolute;left:1155px;top:606px" width="17" height="17" viewBox="0 0 17 17"><rect x="2.5" y="3.5" width="12" height="10" fill="#fff" stroke="#2a2a6a"/><path d="M4 6.5h1M4 8.5h1M4 10.5h1M6 6.5h7M6 8.5h7M6 10.5h7" stroke="#2a2a6a"/></svg>
<svg style="position:absolute;left:1180px;top:606px" width="17" height="17" viewBox="0 0 17 17"><path d="M11 2L5 9h4l-3 6 8-8h-4l3-5z" fill="#f0b040" stroke="#d05030" stroke-width="0.8"/></svg>
<div style="left:1201px;top:606px;width:2px;height:17px;border-left:1px solid #c5c2b2;border-right:1px solid #fff"></div>
<svg style="position:absolute;left:1207px;top:606px" width="17" height="17" viewBox="0 0 17 17"><rect x="0.5" y="1.5" width="15" height="14" fill="#fff" stroke="#2a3a8a"/><rect x="1" y="2" width="14" height="2" fill="#5a8ae0"/><path d="M2.5 7.5h4l1-2h4l1 2h1v6h-11z" fill="#f8f4e0" stroke="#777"/><path d="M4 10.5h1M6 10.5h5" stroke="#2a4ab8"/></svg>
<div style="position:absolute;left:1097px;top:629px;width:316px;height:291px;background:#fff"></div>
<div style="position:absolute;left:1097px;top:629px;width:316px;height:16px;background:#ece9d8"></div>
<div style="position:absolute;left:1097px;top:645px;width:15px;height:275px;background:#ece9d8"></div>
<svg style="position:absolute;left:1101px;top:631px" width="11" height="11" viewBox="0 0 11 11"><rect x="0.5" y="0.5" width="9" height="9" fill="#fff" stroke="#000"/><path d="M2.5 5h5" stroke="#000"/></svg>
<div class="t " style="left:1115px;top:630px;font-weight:bold;color:#6d6d6d"><span class="k">その</span><span class="h">他</span></div>
<div class="t " style="left:1115px;top:645px;">BackStyle</div>
<div class="t " style="left:1262px;top:645px;font-weight:bold">0</div>
<div class="t " style="left:1115px;top:660px;">BaseColor</div>
<div style="position:absolute;left:1260px;top:663px;width:20px;height:11px;background:#000;border:1px solid #000"></div>
<div class="t " style="left:1288px;top:660px;font-weight:bold">Black</div>
<div class="t " style="left:1115px;top:675px;">BorderColor</div>
<div style="position:absolute;left:1260px;top:678px;width:20px;height:11px;background:#808080;border:1px solid #000"></div>
<div class="t " style="left:1288px;top:675px;font-weight:bold">Gray</div>
<div class="t " style="left:1115px;top:690px;">BorderStyle</div>
<div class="t " style="left:1262px;top:690px;font-weight:bold">0</div>
<div class="t " style="left:1115px;top:705px;">BorderWidth</div>
<div class="t " style="left:1262px;top:705px;font-weight:bold">5</div>
<div class="t " style="left:1115px;top:720px;">Caption</div>
<div class="t " style="left:1262px;top:720px;font-weight:bold"></div>
<div class="t " style="left:1115px;top:735px;">CaptionColor</div>
<div style="position:absolute;left:1260px;top:738px;width:20px;height:11px;background:#000;border:1px solid #000"></div>
<div class="t " style="left:1288px;top:735px;font-weight:bold">Black</div>
<div class="t " style="left:1115px;top:750px;">CaptionFont</div>
<div class="t " style="left:1262px;top:750px;font-weight:bold">MS P<span class="k">ゴシ</span><span class="ks">ッ</span><span class="k">ク</span>, 9pt</div>
<div class="t " style="left:1115px;top:765px;">CtlBackColor</div>
<div class="t " style="left:1262px;top:765px;font-weight:bold">0</div>
<div class="t " style="left:1115px;top:780px;">CtlEnabled</div>
<div class="t " style="left:1262px;top:780px;font-weight:bold">True</div>
<div class="t " style="left:1115px;top:795px;">CtlForeColor</div>
<div class="t " style="left:1262px;top:795px;font-weight:bold">0</div>
<div class="t " style="left:1115px;top:810px;">LabelColor</div>
<div style="position:absolute;left:1260px;top:813px;width:20px;height:11px;background:#fff;border:1px solid #000"></div>
<div class="t " style="left:1288px;top:810px;font-weight:bold">White</div>
<div class="t " style="left:1115px;top:825px;">LabelFont</div>
<div class="t " style="left:1262px;top:825px;font-weight:bold">MS P<span class="k">ゴシ</span><span class="ks">ッ</span><span class="k">ク</span>, 9pt, style=I</div>
<div class="t " style="left:1115px;top:840px;">LabelPointFigures</div>
<div class="t " style="left:1262px;top:840px;font-weight:bold">0</div>
<div class="t " style="left:1115px;top:855px;">LongScale</div>
<div class="t " style="left:1262px;top:855px;font-weight:bold">10</div>
<div class="t " style="left:1115px;top:870px;">LongScaleColor</div>
<div style="position:absolute;left:1260px;top:873px;width:20px;height:11px;background:#fff;border:1px solid #000"></div>
<div class="t " style="left:1288px;top:870px;font-weight:bold">White</div>
<div class="t " style="left:1115px;top:885px;">LongScaleWidth</div>
<div class="t " style="left:1262px;top:885px;font-weight:bold">2</div>
<div class="t " style="left:1115px;top:900px;">Max_Value</div>
<div class="t " style="left:1262px;top:900px;font-weight:bold">180</div>
<div class="t " style="left:1115px;top:915px;">MaxAngle</div>
<div class="t " style="left:1262px;top:915px;font-weight:bold">315</div>
<svg style="position:absolute;left:0;top:0" width="1434" height="1040"><path d="M1112 659.5H1412M1257.5 645v15" stroke="#ece9d8"/><path d="M1112 674.5H1412M1257.5 660v15" stroke="#ece9d8"/><path d="M1112 689.5H1412M1257.5 675v15" stroke="#ece9d8"/><path d="M1112 704.5H1412M1257.5 690v15" stroke="#ece9d8"/><path d="M1112 719.5H1412M1257.5 705v15" stroke="#ece9d8"/><path d="M1112 734.5H1412M1257.5 720v15" stroke="#ece9d8"/><path d="M1112 749.5H1412M1257.5 735v15" stroke="#ece9d8"/><path d="M1112 764.5H1412M1257.5 750v15" stroke="#ece9d8"/><path d="M1112 779.5H1412M1257.5 765v15" stroke="#ece9d8"/><path d="M1112 794.5H1412M1257.5 780v15" stroke="#ece9d8"/><path d="M1112 809.5H1412M1257.5 795v15" stroke="#ece9d8"/><path d="M1112 824.5H1412M1257.5 810v15" stroke="#ece9d8"/><path d="M1112 839.5H1412M1257.5 825v15" stroke="#ece9d8"/><path d="M1112 854.5H1412M1257.5 840v15" stroke="#ece9d8"/><path d="M1112 869.5H1412M1257.5 855v15" stroke="#ece9d8"/><path d="M1112 884.5H1412M1257.5 870v15" stroke="#ece9d8"/><path d="M1112 899.5H1412M1257.5 885v15" stroke="#ece9d8"/><path d="M1112 914.5H1412M1257.5 900v15" stroke="#ece9d8"/><path d="M1112 929.5H1412M1257.5 915v15" stroke="#ece9d8"/></svg>
<svg style="position:absolute;left:1101px;top:751px" width="11" height="11" viewBox="0 0 11 11"><rect x="0.5" y="0.5" width="9" height="9" fill="#fff" stroke="#000"/><path d="M2.5 5h5M5 2.5v5" stroke="#000"/></svg>
<svg style="position:absolute;left:1101px;top:826px" width="11" height="11" viewBox="0 0 11 11"><rect x="0.5" y="0.5" width="9" height="9" fill="#fff" stroke="#000"/><path d="M2.5 5h5M5 2.5v5" stroke="#000"/></svg>
<div style="position:absolute;left:1097px;top:920px;width:316px;height:0px;"></div>
<div style="position:absolute;left:1413px;top:630px;width:15px;height:290px;background:linear-gradient(90deg,#f3f1ec,#fefefb)"></div>
<div style="left:1413px;top:630px;width:15px;height:15px;background:linear-gradient(135deg,#e3ebfd,#c5d5f8);border:1px solid #b7cbf5;border-radius:2px"></div>
<svg style="position:absolute;left:0;top:0;overflow:visible" width="1" height="1"><path d="M1416.5 639.5l4-4 4 4" fill="none" stroke="#4d6185" stroke-width="2"/></svg>
<div style="left:1413px;top:905px;width:15px;height:15px;background:linear-gradient(135deg,#e3ebfd,#c5d5f8);border:1px solid #b7cbf5;border-radius:2px"></div>
<svg style="position:absolute;left:0;top:0;overflow:visible" width="1" height="1"><path d="M1416.5 910.5l4 4 4-4" fill="none" stroke="#4d6185" stroke-width="2"/></svg>
<div style="left:1413px;top:646px;width:15px;height:69px;background:linear-gradient(90deg,#cad8fb,#bccff8 60%,#b3c6f3);border:1px solid #b1c5f3;border-radius:2px"></div>
<div style="position:absolute;left:1097px;top:920px;width:333px;height:2px;background:#ece9d8"></div>
<div style="position:absolute;left:1097px;top:922px;width:333px;height:1px;background:#c5c2b2"></div>
<div style="position:absolute;left:1098px;top:923px;width:331px;height:28px;background:#ece9d8"></div>
<div class="t " style="left:1103px;top:927px;color:#1f4fd8"><u>ActiveX <span class="h">ー</span><span class="k">プロパテ</span><span class="ks">ィ</span></u></div>
<div style="position:absolute;left:1097px;top:950px;width:333px;height:1px;background:#c5c2b2"></div>
<div style="position:absolute;left:1098px;top:953px;width:331px;height:59px;background:#ece9d8;border-top:1px solid #c5c2b2;border-bottom:1px solid #c5c2b2"></div>
<div class="t " style="left:1101px;top:955px;font-weight:bold"><span class="k">その</span><span class="h">他</span></div>
<svg style="position:absolute;left:1417px;top:1022px" width="12" height="12" viewBox="0 0 12 12"><g fill="#b0ad9c"><rect x="9" y="1" width="2" height="2"/><rect x="5" y="5" width="2" height="2"/><rect x="9" y="5" width="2" height="2"/><rect x="1" y="9" width="2" height="2"/><rect x="5" y="9" width="2" height="2"/><rect x="9" y="9" width="2" height="2"/></g></svg>
<script>(function(){var e=document.createElement("span");e.style.cssText="position:absolute;left:-9999px;top:0;font-size:100px;letter-spacing:0;white-space:nowrap";e.textContent="漢漢";document.body.appendChild(e);var w=e.getBoundingClientRect().width;document.body.removeChild(e);if(w>180)document.documentElement.className+=" cjk";})();</script>
</body></html>
